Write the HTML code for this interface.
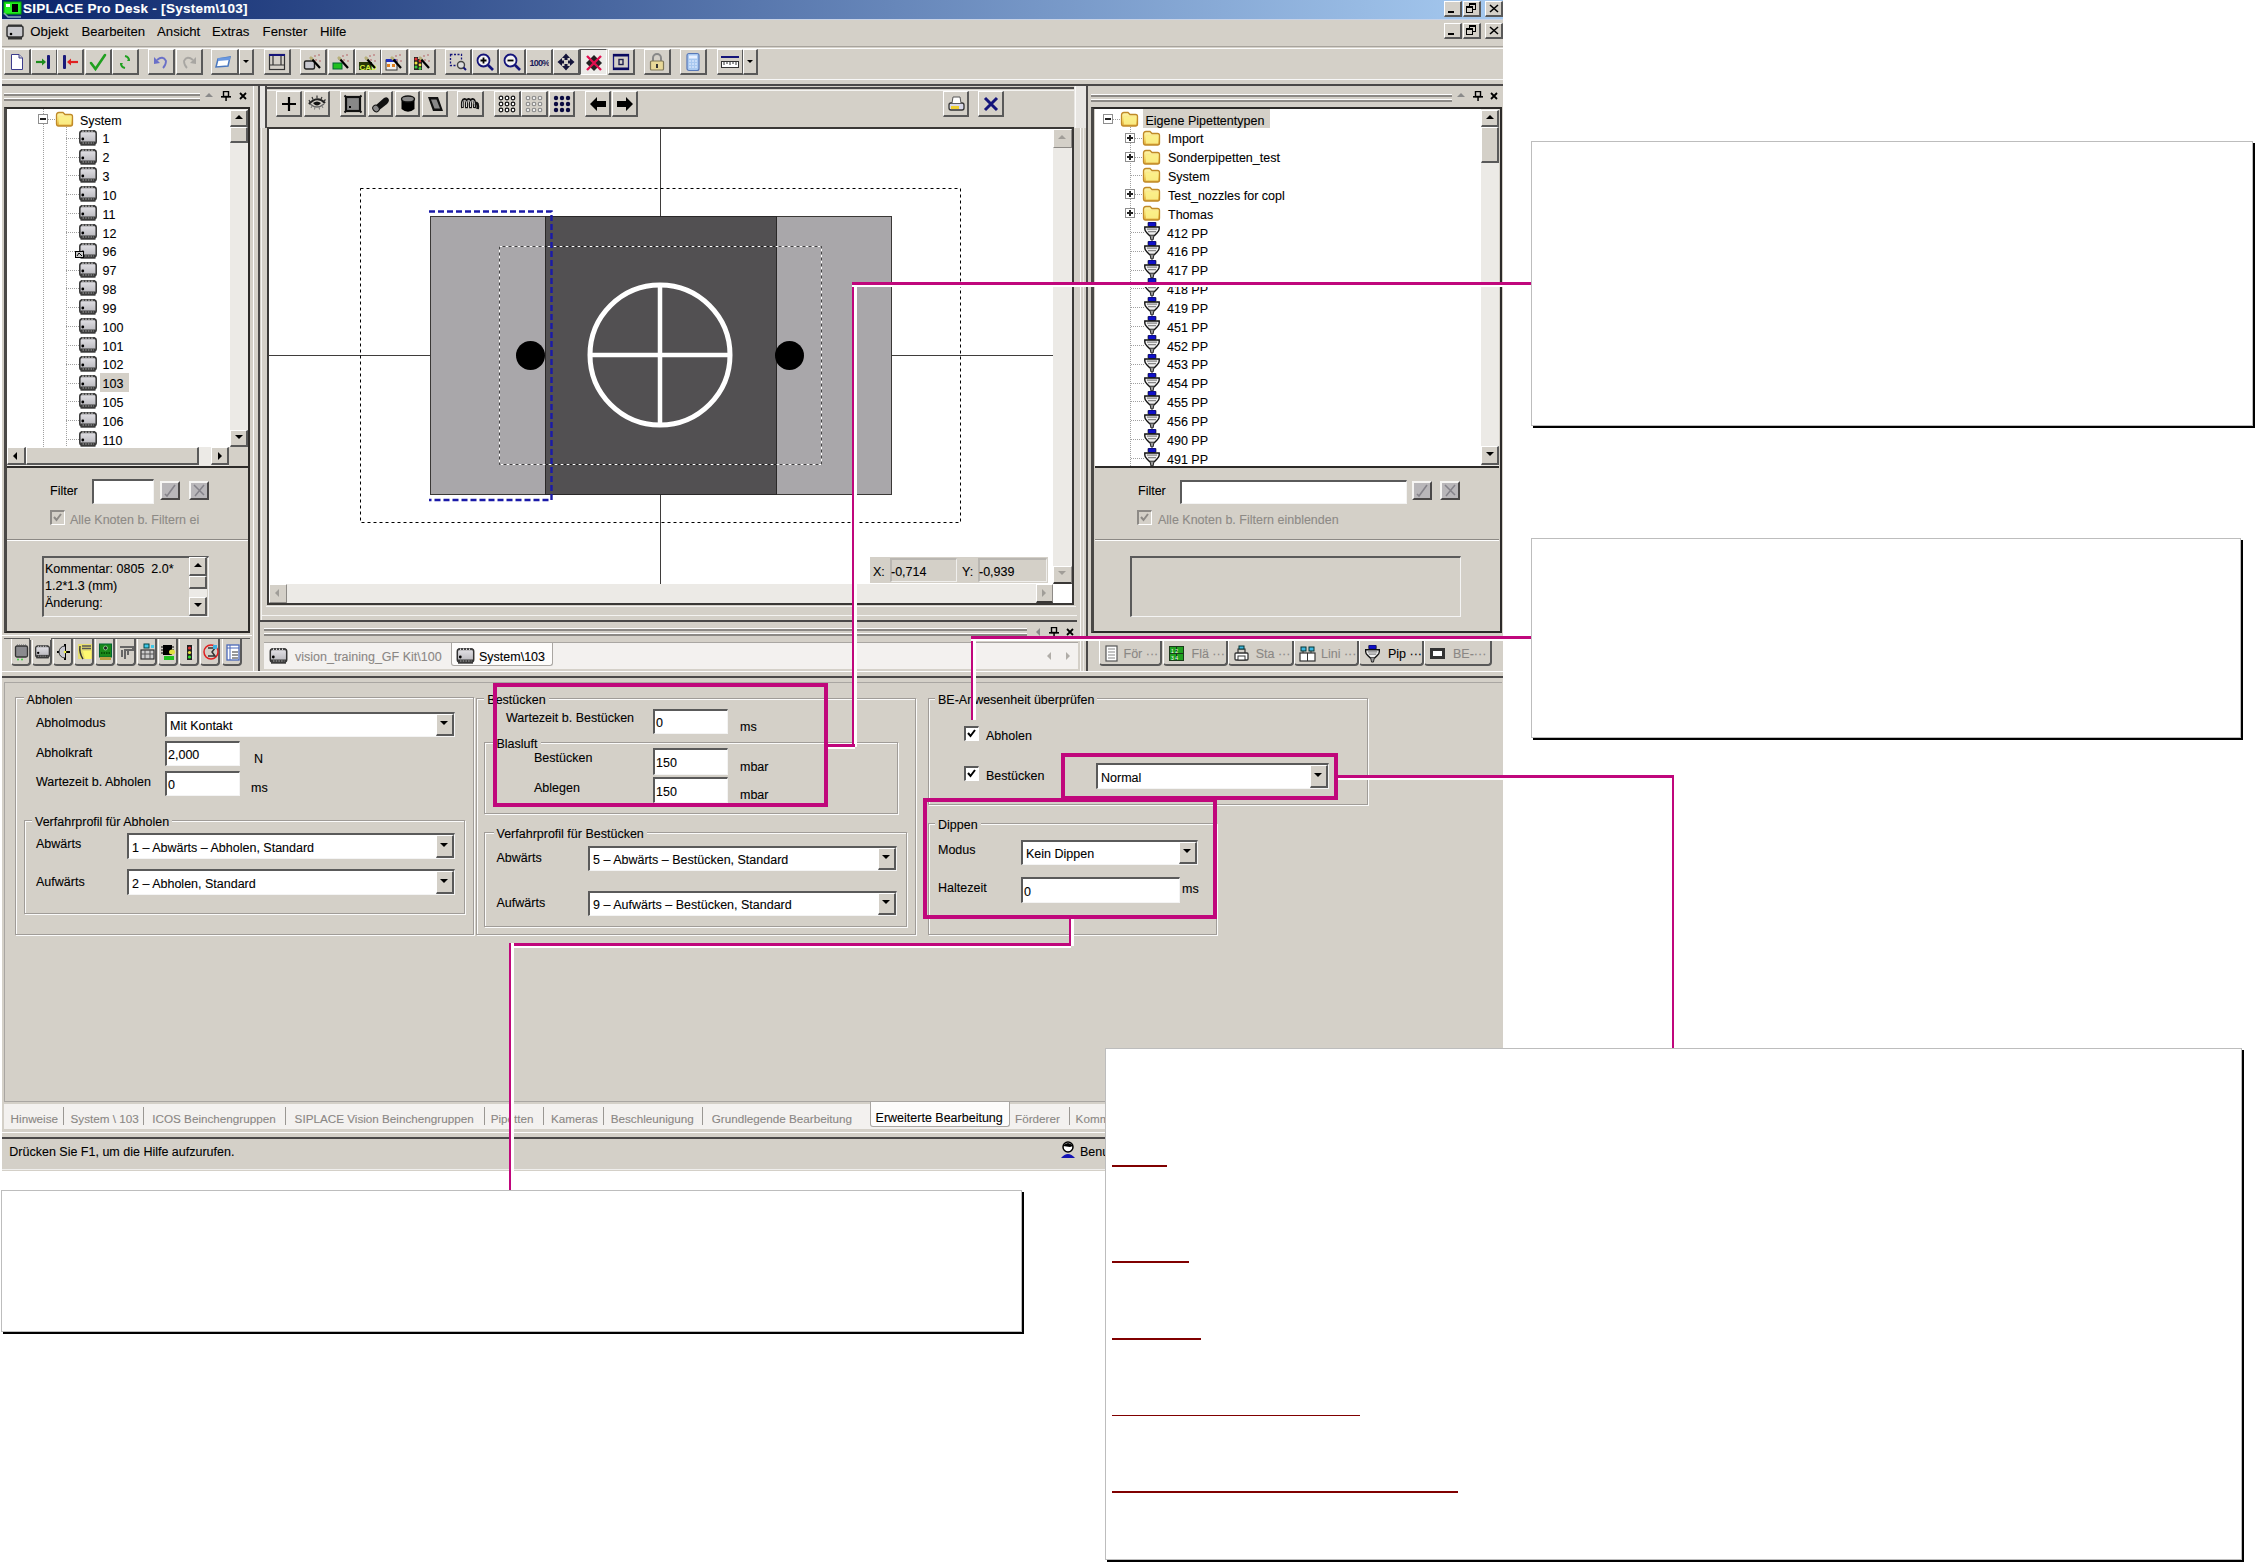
<!DOCTYPE html><html><head><meta charset="utf-8"><style>html,body{margin:0;padding:0;background:#fff;width:2255px;height:1562px;overflow:hidden;position:relative}.a{position:absolute}.t{position:absolute;font-family:"Liberation Sans",sans-serif;white-space:pre;color:#000;-webkit-text-stroke:0.1px currentColor}</style></head><body>
<svg width="0" height="0" style="position:absolute"><defs><linearGradient id="gcomp" x1="0" y1="0" x2="0" y2="1"><stop offset="0" stop-color="#e4e3e8"/><stop offset="1" stop-color="#b4b3b8"/></linearGradient><linearGradient id="gfold" x1="0" y1="0" x2="0" y2="1"><stop offset="0" stop-color="#fff8b0"/><stop offset="0.6" stop-color="#f6dc6a"/><stop offset="1" stop-color="#e0a838"/></linearGradient><symbol id="comp" viewBox="0 0 18 16"><rect x="0.8" y="1" width="16.4" height="13" rx="2.5" fill="url(#gcomp)" stroke="#333" stroke-width="1.5"/><rect x="2" y="0" width="14" height="2.2" fill="#444"/><path d="M4 0.5 V2 M7 0.5 V2 M10 0.5 V2 M13 0.5 V2" stroke="#ddd" stroke-width="1"/><rect x="1.5" y="11.5" width="15" height="4.2" fill="#3a3a3a"/><path d="M3.5 13 H15" stroke="#aaa" stroke-width="1" stroke-dasharray="1.5,1.2"/><circle cx="3.8" cy="9" r="1.4" fill="#000"/></symbol><symbol id="fold" viewBox="0 0 19 16"><path d="M1.5 4 Q1.5 1.5 4 1.5 L8 1.5 L10 3.5 L15.5 3.5 Q17.5 3.5 17.5 5.5 L17.5 13 Q17.5 15 15.5 15 L3.5 15 Q1.5 15 1.5 13 Z" fill="url(#gfold)" stroke="#c08a28" stroke-width="1.3"/><rect x="4" y="6" width="12" height="7.5" fill="#fbef8a" opacity="0.9"/></symbol><symbol id="nozz" viewBox="0 0 16 19"><rect x="4" y="0" width="8" height="4.5" rx="1" fill="#1010c8" stroke="#000" stroke-width="0.6"/><path d="M0.8 5 L15.2 5 L15.2 7 Q15.2 9 13 11 L10.5 13.5 L5.5 13.5 L3 11 Q0.8 9 0.8 7 Z" fill="#eee" stroke="#111" stroke-width="1.4"/><path d="M3 7.2 H13 M4 9.6 H12" stroke="#888" stroke-width="1.2"/><path d="M6 13.5 L7 18 L9 18 L10 13.5" fill="#999" stroke="#222" stroke-width="1"/></symbol></defs></svg>
<div class="a" style="left:2px;top:0px;width:1501px;height:1171px;background:#d4d0c8"></div>
<div class="a" style="left:2px;top:0px;width:1501px;height:19px;background:linear-gradient(to right,#0a246a 0%,#a6caf0 100%)"></div>
<div class="a" style="left:2px;top:19px;width:1501px;height:1px;background:#c9d3e6"></div>
<svg class="a" style="left:3px;top:1px;" width="19" height="17" viewBox="0 0 19 17"><rect x="1" y="1" width="17" height="12" fill="#2e2" stroke="#0a0" /><rect x="9" y="3" width="6" height="8" fill="#000"/><rect x="3" y="3" width="4" height="3" fill="#fff"/><path d="M1 12 L5 16 L18 16" stroke="#8ab" stroke-width="1.5" fill="none"/></svg>
<div class="t" style="left:23px;top:2.0px;font-size:13.5px;line-height:13.5px;color:#fff;font-weight:bold;letter-spacing:0.28px">SIPLACE Pro Desk - [System\103]</div>
<div class="a" style="left:1444px;top:1px;width:18px;height:16px;background:#d4d0c8;border-top:1px solid #fff;border-left:1px solid #fff;border-right:2px solid #595959;border-bottom:2px solid #595959;box-sizing:border-box"></div>
<div class="a" style="left:1448px;top:11px;width:6px;height:2px;background:#000"></div>
<div class="a" style="left:1463px;top:1px;width:18px;height:16px;background:#d4d0c8;border-top:1px solid #fff;border-left:1px solid #fff;border-right:2px solid #595959;border-bottom:2px solid #595959;box-sizing:border-box"></div>
<svg class="a" style="left:1466px;top:3px;" width="11" height="11" viewBox="0 0 11 11"><rect x="3.5" y="0.5" width="6" height="6" fill="none" stroke="#000"/><rect x="3" y="0" width="7" height="2" fill="#000"/><rect x="0.5" y="3.5" width="6" height="6" fill="#d4d0c8" stroke="#000"/><rect x="0" y="3" width="7" height="2" fill="#000"/></svg>
<div class="a" style="left:1485px;top:1px;width:18px;height:16px;background:#d4d0c8;border-top:1px solid #fff;border-left:1px solid #fff;border-right:2px solid #595959;border-bottom:2px solid #595959;box-sizing:border-box"></div>
<svg class="a" style="left:1489px;top:4px;" width="10" height="9" viewBox="0 0 10 9"><path d="M1 1 L9 8 M9 1 L1 8" stroke="#000" stroke-width="1.6"/></svg>
<div class="a" style="left:1444px;top:23px;width:18px;height:16px;background:#d4d0c8;border-top:1px solid #fff;border-left:1px solid #fff;border-right:2px solid #595959;border-bottom:2px solid #595959;box-sizing:border-box"></div>
<div class="a" style="left:1448px;top:33px;width:6px;height:2px;background:#000"></div>
<div class="a" style="left:1463px;top:23px;width:18px;height:16px;background:#d4d0c8;border-top:1px solid #fff;border-left:1px solid #fff;border-right:2px solid #595959;border-bottom:2px solid #595959;box-sizing:border-box"></div>
<svg class="a" style="left:1466px;top:25px;" width="11" height="11" viewBox="0 0 11 11"><rect x="3.5" y="0.5" width="6" height="6" fill="none" stroke="#000"/><rect x="3" y="0" width="7" height="2" fill="#000"/><rect x="0.5" y="3.5" width="6" height="6" fill="#d4d0c8" stroke="#000"/><rect x="0" y="3" width="7" height="2" fill="#000"/></svg>
<div class="a" style="left:1485px;top:23px;width:18px;height:16px;background:#d4d0c8;border-top:1px solid #fff;border-left:1px solid #fff;border-right:2px solid #595959;border-bottom:2px solid #595959;box-sizing:border-box"></div>
<svg class="a" style="left:1489px;top:26px;" width="10" height="9" viewBox="0 0 10 9"><path d="M1 1 L9 8 M9 1 L1 8" stroke="#000" stroke-width="1.6"/></svg>
<svg class="a" style="left:6px;top:24px;" width="19" height="16" viewBox="0 0 19 16"><rect x="1" y="2" width="16" height="11" rx="2" fill="#c8c8cc" stroke="#333" stroke-width="1.5"/><rect x="2" y="0.5" width="14" height="2" fill="#333"/><rect x="2" y="13" width="14" height="2.5" fill="#333"/><circle cx="5" cy="10" r="1.3" fill="#000"/></svg>
<div class="t" style="left:30.3px;top:24.6px;font-size:13.2px;line-height:13.2px;color:#000;font-weight:normal;">Objekt</div>
<div class="t" style="left:81.4px;top:24.6px;font-size:13.2px;line-height:13.2px;color:#000;font-weight:normal;">Bearbeiten</div>
<div class="t" style="left:157px;top:24.6px;font-size:13.2px;line-height:13.2px;color:#000;font-weight:normal;">Ansicht</div>
<div class="t" style="left:212px;top:24.6px;font-size:13.2px;line-height:13.2px;color:#000;font-weight:normal;">Extras</div>
<div class="t" style="left:262.6px;top:24.6px;font-size:13.2px;line-height:13.2px;color:#000;font-weight:normal;">Fenster</div>
<div class="t" style="left:320px;top:24.6px;font-size:13.2px;line-height:13.2px;color:#000;font-weight:normal;">Hilfe</div>
<div class="a" style="left:2px;top:46px;width:1501px;height:1px;background:#a7a39d"></div>
<div class="a" style="left:2px;top:48px;width:1501px;height:1px;background:#fbfbfb"></div>
<div class="a" style="left:4px;top:49px;width:27px;height:26px;background:#d4d0c8;border-top:1px solid #fff;border-left:1px solid #fff;border-right:2px solid #595959;border-bottom:2px solid #595959;box-sizing:border-box"></div>
<div class="a" style="left:31px;top:49px;width:27px;height:26px;background:#d4d0c8;border-top:1px solid #fff;border-left:1px solid #fff;border-right:2px solid #595959;border-bottom:2px solid #595959;box-sizing:border-box"></div>
<div class="a" style="left:57px;top:49px;width:27px;height:26px;background:#d4d0c8;border-top:1px solid #fff;border-left:1px solid #fff;border-right:2px solid #595959;border-bottom:2px solid #595959;box-sizing:border-box"></div>
<div class="a" style="left:85px;top:49px;width:27px;height:26px;background:#d4d0c8;border-top:1px solid #fff;border-left:1px solid #fff;border-right:2px solid #595959;border-bottom:2px solid #595959;box-sizing:border-box"></div>
<div class="a" style="left:112px;top:49px;width:27px;height:26px;background:#d4d0c8;border-top:1px solid #fff;border-left:1px solid #fff;border-right:2px solid #595959;border-bottom:2px solid #595959;box-sizing:border-box"></div>
<div class="a" style="left:148px;top:49px;width:27px;height:26px;background:#d4d0c8;border-top:1px solid #fff;border-left:1px solid #fff;border-right:2px solid #595959;border-bottom:2px solid #595959;box-sizing:border-box"></div>
<div class="a" style="left:176px;top:49px;width:27px;height:26px;background:#d4d0c8;border-top:1px solid #fff;border-left:1px solid #fff;border-right:2px solid #595959;border-bottom:2px solid #595959;box-sizing:border-box"></div>
<div class="a" style="left:211px;top:49px;width:28px;height:26px;background:#d4d0c8;border-top:1px solid #fff;border-left:1px solid #fff;border-right:2px solid #595959;border-bottom:2px solid #595959;box-sizing:border-box"></div>
<div class="a" style="left:264px;top:49px;width:27px;height:26px;background:#d4d0c8;border-top:1px solid #fff;border-left:1px solid #fff;border-right:2px solid #595959;border-bottom:2px solid #595959;box-sizing:border-box"></div>
<div class="a" style="left:300px;top:49px;width:27px;height:26px;background:#d4d0c8;border-top:1px solid #fff;border-left:1px solid #fff;border-right:2px solid #595959;border-bottom:2px solid #595959;box-sizing:border-box"></div>
<div class="a" style="left:328px;top:49px;width:27px;height:26px;background:#d4d0c8;border-top:1px solid #fff;border-left:1px solid #fff;border-right:2px solid #595959;border-bottom:2px solid #595959;box-sizing:border-box"></div>
<div class="a" style="left:355px;top:49px;width:27px;height:26px;background:#d4d0c8;border-top:1px solid #fff;border-left:1px solid #fff;border-right:2px solid #595959;border-bottom:2px solid #595959;box-sizing:border-box"></div>
<div class="a" style="left:381px;top:49px;width:27px;height:26px;background:#d4d0c8;border-top:1px solid #fff;border-left:1px solid #fff;border-right:2px solid #595959;border-bottom:2px solid #595959;box-sizing:border-box"></div>
<div class="a" style="left:409px;top:49px;width:27px;height:26px;background:#d4d0c8;border-top:1px solid #fff;border-left:1px solid #fff;border-right:2px solid #595959;border-bottom:2px solid #595959;box-sizing:border-box"></div>
<div class="a" style="left:445px;top:49px;width:27px;height:26px;background:#d4d0c8;border-top:1px solid #fff;border-left:1px solid #fff;border-right:2px solid #595959;border-bottom:2px solid #595959;box-sizing:border-box"></div>
<div class="a" style="left:472px;top:49px;width:27px;height:26px;background:#d4d0c8;border-top:1px solid #fff;border-left:1px solid #fff;border-right:2px solid #595959;border-bottom:2px solid #595959;box-sizing:border-box"></div>
<div class="a" style="left:499px;top:49px;width:27px;height:26px;background:#d4d0c8;border-top:1px solid #fff;border-left:1px solid #fff;border-right:2px solid #595959;border-bottom:2px solid #595959;box-sizing:border-box"></div>
<div class="a" style="left:526px;top:49px;width:27px;height:26px;background:#d4d0c8;border-top:1px solid #fff;border-left:1px solid #fff;border-right:2px solid #595959;border-bottom:2px solid #595959;box-sizing:border-box"></div>
<div class="a" style="left:553px;top:49px;width:27px;height:26px;background:#d4d0c8;border-top:1px solid #fff;border-left:1px solid #fff;border-right:2px solid #595959;border-bottom:2px solid #595959;box-sizing:border-box"></div>
<div class="a" style="left:580px;top:49px;width:27px;height:26px;background:#ecebe8;border-top:1px solid #595959;border-left:1px solid #595959;border-right:1px solid #fff;border-bottom:1px solid #fff;box-sizing:border-box"></div>
<div class="a" style="left:608px;top:49px;width:27px;height:26px;background:#d4d0c8;border-top:1px solid #fff;border-left:1px solid #fff;border-right:2px solid #595959;border-bottom:2px solid #595959;box-sizing:border-box"></div>
<div class="a" style="left:644px;top:49px;width:27px;height:26px;background:#d4d0c8;border-top:1px solid #fff;border-left:1px solid #fff;border-right:2px solid #595959;border-bottom:2px solid #595959;box-sizing:border-box"></div>
<div class="a" style="left:680px;top:49px;width:27px;height:26px;background:#d4d0c8;border-top:1px solid #fff;border-left:1px solid #fff;border-right:2px solid #595959;border-bottom:2px solid #595959;box-sizing:border-box"></div>
<div class="a" style="left:717px;top:49px;width:27px;height:26px;background:#d4d0c8;border-top:1px solid #fff;border-left:1px solid #fff;border-right:2px solid #595959;border-bottom:2px solid #595959;box-sizing:border-box"></div>
<svg class="a" style="left:7px;top:52px;" width="20" height="20" viewBox="0 0 20 20"><path d="M4.5 2.5 L12 2.5 L15.5 6 L15.5 17.5 L4.5 17.5 Z" fill="#fff" stroke="#3c3c8c" stroke-width="1"/><path d="M12 2.5 L12 6 L15.5 6" fill="#ccc" stroke="#3c3c8c"/></svg>
<svg class="a" style="left:34px;top:52px;" width="20" height="20" viewBox="0 0 20 20"><path d="M2 10 L10 10" stroke="#1e8c1e" stroke-width="2.2"/><path d="M8 6.5 L12 10 L8 13.5 Z" fill="#1e8c1e"/><rect x="13" y="3" width="3" height="14" rx="1" fill="#1a1a7a"/></svg>
<svg class="a" style="left:60px;top:52px;" width="20" height="20" viewBox="0 0 20 20"><path d="M9 10 L18 10" stroke="#e02020" stroke-width="2.2"/><path d="M11 6.5 L7 10 L11 13.5 Z" fill="#e02020"/><rect x="3" y="3" width="3" height="14" rx="1" fill="#1a1a7a"/></svg>
<svg class="a" style="left:88px;top:52px;" width="20" height="20" viewBox="0 0 20 20"><path d="M3 11 L7.5 17 L17 3" stroke="#20a020" stroke-width="2.6" fill="none" stroke-linecap="round"/></svg>
<svg class="a" style="left:115px;top:52px;" width="20" height="20" viewBox="0 0 20 20"><path d="M10 4 A5 5 0 0 1 14 9" stroke="#20a020" stroke-width="2" fill="none"/><path d="M12 9 L15 9 L14 6" fill="#20a020"/><path d="M10 16 A5 5 0 0 1 6 11" stroke="#20a020" stroke-width="2" fill="none"/><path d="M8 11 L5 11 L6 14" fill="#20a020"/></svg>
<svg class="a" style="left:151px;top:52px;" width="20" height="20" viewBox="0 0 20 20"><path d="M6 8 Q12 3 15 9 Q15 13 12 16" stroke="#6a70c8" stroke-width="1.8" fill="none"/><path d="M3 5 L3 12 L9 11 Z" fill="#6a70c8"/></svg>
<svg class="a" style="left:179px;top:52px;" width="20" height="20" viewBox="0 0 20 20"><path d="M14 8 Q8 3 5 9 Q5 13 8 16" stroke="#a8a6a2" stroke-width="1.8" fill="none"/><path d="M17 5 L17 12 L11 11 Z" fill="#a8a6a2"/></svg>
<svg class="a" style="left:214px;top:52px;" width="20" height="20" viewBox="0 0 20 20"><path d="M4 7 L16 5 L14 14 L2 15 Z" fill="#fff" stroke="#4a78c0" stroke-width="1.5"/><path d="M4 6 L16 5 L16 8 L4 9 Z" fill="#6a98e0"/></svg>
<svg class="a" style="left:267px;top:52px;" width="20" height="20" viewBox="0 0 20 20"><rect x="2.5" y="2.5" width="15" height="15" fill="none" stroke="#333" stroke-width="1.2"/><rect x="2" y="2" width="16" height="2" fill="#14147a"/><path d="M6 4 V13 M14 4 V13 M2.5 13 H17.5" stroke="#333" stroke-width="1.2"/></svg>
<svg class="a" style="left:303px;top:52px;" width="20" height="20" viewBox="0 0 20 20"><rect x="1.5" y="9" width="10" height="8" rx="1.5" fill="#c8c8d0" stroke="#222" stroke-width="1.4"/><path d="M8 6 L17 16" stroke="#000" stroke-width="2.2"/><path d="M7 5 L9.5 7.5" stroke="#b8b07a" stroke-width="2.6"/><circle cx="12" cy="4" r="1" fill="#c08888"/><circle cx="16" cy="3" r="1" fill="#c08888"/><circle cx="13" cy="8" r="1" fill="#c08888"/><circle cx="17" cy="9" r="1" fill="#c08888"/></svg>
<svg class="a" style="left:331px;top:52px;" width="20" height="20" viewBox="0 0 20 20"><rect x="2" y="11" width="9" height="6" fill="#20c020" stroke="#063" stroke-width="1"/><path d="M8 6 L17 16" stroke="#000" stroke-width="2.2"/><path d="M7 5 L9.5 7.5" stroke="#b8b07a" stroke-width="2.6"/><circle cx="12" cy="4" r="1" fill="#c08888"/><circle cx="16" cy="3" r="1" fill="#c08888"/><circle cx="13" cy="8" r="1" fill="#c08888"/><circle cx="17" cy="9" r="1" fill="#c08888"/></svg>
<svg class="a" style="left:358px;top:52px;" width="20" height="20" viewBox="0 0 20 20"><rect x="1" y="10" width="13" height="8" fill="#283808"/><text x="1.5" y="17.5" font-family="Liberation Sans" font-size="8" font-weight="bold" fill="#d8f040">CAD</text><path d="M8 6 L17 16" stroke="#000" stroke-width="2.2"/><path d="M7 5 L9.5 7.5" stroke="#b8b07a" stroke-width="2.6"/><circle cx="12" cy="4" r="1" fill="#c08888"/><circle cx="16" cy="3" r="1" fill="#c08888"/><circle cx="13" cy="8" r="1" fill="#c08888"/><circle cx="17" cy="9" r="1" fill="#c08888"/></svg>
<svg class="a" style="left:384px;top:52px;" width="20" height="20" viewBox="0 0 20 20"><rect x="2" y="8" width="11" height="10" fill="#f0f0f0" stroke="#333"/><rect x="2" y="7" width="11" height="3" fill="#2030c0"/><rect x="3" y="12" width="3" height="3" fill="#e08020"/><rect x="8" y="12" width="3" height="3" fill="#e08020"/><path d="M8 6 L17 16" stroke="#000" stroke-width="2.2"/><path d="M7 5 L9.5 7.5" stroke="#b8b07a" stroke-width="2.6"/><circle cx="12" cy="4" r="1" fill="#c08888"/><circle cx="16" cy="3" r="1" fill="#c08888"/><circle cx="13" cy="8" r="1" fill="#c08888"/><circle cx="17" cy="9" r="1" fill="#c08888"/></svg>
<svg class="a" style="left:412px;top:52px;" width="20" height="20" viewBox="0 0 20 20"><rect x="2" y="5" width="4" height="13" fill="#222"/><circle cx="4" cy="7" r="1.5" fill="#e03030"/><circle cx="4" cy="11" r="1.5" fill="#f0e040"/><circle cx="4" cy="15" r="1.5" fill="#40d040"/><rect x="6" y="7" width="4" height="11" fill="#222"/><circle cx="8" cy="9" r="1.4" fill="#e03030"/><circle cx="8" cy="13" r="1.4" fill="#f0e040"/><circle cx="8" cy="16.5" r="1.4" fill="#40d040"/><path d="M8 6 L17 16" stroke="#000" stroke-width="2.2"/><path d="M7 5 L9.5 7.5" stroke="#b8b07a" stroke-width="2.6"/><circle cx="12" cy="4" r="1" fill="#c08888"/><circle cx="16" cy="3" r="1" fill="#c08888"/><circle cx="13" cy="8" r="1" fill="#c08888"/><circle cx="17" cy="9" r="1" fill="#c08888"/></svg>
<svg class="a" style="left:448px;top:52px;" width="20" height="20" viewBox="0 0 20 20"><rect x="2.5" y="2.5" width="11" height="11" fill="none" stroke="#14147a" stroke-width="1.3" stroke-dasharray="2,1.5"/><circle cx="13" cy="13" r="3.5" fill="#ddd" stroke="#444" stroke-width="1.4"/><path d="M15.5 15.5 L18 18" stroke="#14147a" stroke-width="2"/></svg>
<svg class="a" style="left:475px;top:52px;" width="20" height="20" viewBox="0 0 20 20"><circle cx="8.5" cy="8.5" r="6" fill="#f4f4f4" stroke="#14147a" stroke-width="1.8"/><path d="M5.5 8.5 H11.5 M8.5 5.5 V11.5" stroke="#000" stroke-width="1.8"/><path d="M13 13 L18 18" stroke="#14147a" stroke-width="2.6"/></svg>
<svg class="a" style="left:502px;top:52px;" width="20" height="20" viewBox="0 0 20 20"><circle cx="8.5" cy="8.5" r="6" fill="#f4f4f4" stroke="#14147a" stroke-width="1.8"/><path d="M5.5 8.5 H11.5" stroke="#000" stroke-width="1.8"/><path d="M13 13 L18 18" stroke="#14147a" stroke-width="2.6"/></svg>
<svg class="a" style="left:529px;top:52px;" width="20" height="20" viewBox="0 0 20 20"><text x="0.5" y="14" font-family="Liberation Sans" font-size="9" font-weight="bold" fill="#1a1a5a" letter-spacing="-0.8">100%</text></svg>
<svg class="a" style="left:556px;top:52px;" width="20" height="20" viewBox="0 0 20 20"><path d="M10 1.5 L14 6 L11.5 6 L11.5 8 L8.5 8 L8.5 6 L6 6 Z M10 18.5 L14 14 L11.5 14 L11.5 12 L8.5 12 L8.5 14 L6 14 Z M1.5 10 L6 6 L6 8.5 L8 8.5 L8 11.5 L6 11.5 L6 14 Z M18.5 10 L14 6 L14 8.5 L12 8.5 L12 11.5 L14 11.5 L14 14 Z" fill="#14143a"/></svg>
<svg class="a" style="left:584px;top:53px;" width="20" height="20" viewBox="0 0 20 20"><path d="M10 2 L14 6 L18 10 L14 14 L10 18 L6 14 L2 10 L6 6 Z" fill="#222"/><path d="M3 3 L17 17 M17 3 L3 17" stroke="#e01050" stroke-width="2.4"/></svg>
<svg class="a" style="left:611px;top:52px;" width="20" height="20" viewBox="0 0 20 20"><rect x="2.5" y="2.5" width="15" height="15" fill="none" stroke="#14147a" stroke-width="1.3"/><rect x="2" y="2" width="16" height="2.5" fill="#0a0a60"/><rect x="2" y="15.5" width="16" height="2.5" fill="#0a0a60"/><rect x="8" y="7.5" width="4" height="5" fill="none" stroke="#222250" stroke-width="1.4"/></svg>
<svg class="a" style="left:647px;top:52px;" width="20" height="20" viewBox="0 0 20 20"><path d="M6 9 V6 A4 4 0 0 1 14 6 V9" stroke="#888" stroke-width="2" fill="none"/><rect x="3.5" y="9" width="13" height="9" rx="1" fill="#e8d898" stroke="#807858" stroke-width="1.2"/><rect x="9" y="12" width="2" height="4" fill="#333"/></svg>
<svg class="a" style="left:683px;top:52px;" width="20" height="20" viewBox="0 0 20 20"><rect x="4" y="1.5" width="12" height="17" rx="2" fill="#a8c8f0" stroke="#5878b8" stroke-width="1.2"/><rect x="6" y="3.5" width="8" height="3" fill="#e8f0ff"/><path d="M6 9 H14 M6 12 H14 M6 15 H14" stroke="#e8f0ff" stroke-width="1.2" stroke-dasharray="2,1"/></svg>
<svg class="a" style="left:720px;top:52px;" width="20" height="20" viewBox="0 0 20 20"><rect x="1" y="4" width="18" height="2" fill="#14147a"/><rect x="1.5" y="9.5" width="17" height="6" fill="#fff" stroke="#333"/><path d="M4 10 V13 M7 10 V12 M10 10 V13 M13 10 V12 M16 10 V13" stroke="#333"/></svg>
<div class="a" style="left:239px;top:49px;width:15px;height:26px;background:#d4d0c8;border-top:1px solid #fff;border-left:1px solid #fff;border-right:2px solid #595959;border-bottom:2px solid #595959;box-sizing:border-box"></div>
<svg class="a" style="left:243px;top:60px;" width="6" height="4" viewBox="0 0 6 4"><path d="M0 0 L6 0 L3 3 Z" fill="#000"/></svg>
<div class="a" style="left:743px;top:49px;width:15px;height:26px;background:#d4d0c8;border-top:1px solid #fff;border-left:1px solid #fff;border-right:2px solid #595959;border-bottom:2px solid #595959;box-sizing:border-box"></div>
<svg class="a" style="left:747px;top:60px;" width="6" height="4" viewBox="0 0 6 4"><path d="M0 0 L6 0 L3 3 Z" fill="#000"/></svg>
<div class="a" style="left:2px;top:79px;width:1501px;height:1px;background:#f7f7f7"></div>
<div class="a" style="left:2px;top:84px;width:1501px;height:2px;background:#4a4848"></div>
<div class="a" style="left:4px;top:93px;width:196px;height:1px;background:#fdfdfd"></div>
<div class="a" style="left:4px;top:94px;width:196px;height:2px;background:#8c8985"></div>
<div class="a" style="left:4px;top:98px;width:196px;height:1px;background:#fdfdfd"></div>
<div class="a" style="left:4px;top:99px;width:196px;height:2px;background:#8c8985"></div>
<svg class="a" style="left:205px;top:93px;" width="8" height="5" viewBox="0 0 8 5"><path d="M0 4 L8 4 L4 0 Z" fill="#8a8a8a"/></svg>
<svg class="a" style="left:221px;top:91px;" width="10" height="10" viewBox="0 0 10 10"><rect x="2.5" y="0.5" width="5" height="5" fill="none" stroke="#000" stroke-width="1.4"/><rect x="0" y="5" width="10" height="1.6" fill="#000"/><rect x="4.3" y="6" width="1.5" height="4" fill="#000"/></svg>
<svg class="a" style="left:239px;top:92px;" width="8" height="8" viewBox="0 0 8 8"><path d="M1 1 L7 7 M7 1 L1 7" stroke="#000" stroke-width="1.8"/></svg>
<div class="a" style="left:4px;top:107px;width:246px;height:526px;background:#d4d0c8;border-top:2px solid #2c2a28;border-left:3px solid #4a4846;border-right:2px solid #2c2a28;border-bottom:2px solid #2c2a28;box-sizing:border-box"></div>
<div class="a" style="left:7px;top:109px;width:223px;height:338px;background:#fff"></div>
<div class="a" style="left:230px;top:109px;width:18px;height:338px;background:#eceae6"></div>
<div class="a" style="left:230px;top:110px;width:18px;height:17px;background:#d4d0c8;border-top:1px solid #fff;border-left:1px solid #fff;border-right:2px solid #595959;border-bottom:2px solid #595959;box-sizing:border-box"></div>
<svg class="a" style="left:235px;top:115px;" width="8" height="5" viewBox="0 0 8 5"><path d="M0 4 L8 4 L4 0 Z" fill="#000"/></svg>
<div class="a" style="left:230px;top:127px;width:18px;height:16px;background:#d4d0c8;border-top:1px solid #fff;border-left:1px solid #fff;border-right:2px solid #595959;border-bottom:2px solid #595959;box-sizing:border-box"></div>
<div class="a" style="left:230px;top:430px;width:18px;height:17px;background:#d4d0c8;border-top:1px solid #fff;border-left:1px solid #fff;border-right:2px solid #595959;border-bottom:2px solid #595959;box-sizing:border-box"></div>
<svg class="a" style="left:235px;top:435px;" width="8" height="5" viewBox="0 0 8 5"><path d="M0 0 L8 0 L4 4 Z" fill="#000"/></svg>
<div class="a" style="left:7px;top:447px;width:241px;height:19px;background:#eceae6"></div>
<div class="a" style="left:7px;top:447px;width:19px;height:18px;background:#d4d0c8;border-top:1px solid #fff;border-left:1px solid #fff;border-right:2px solid #595959;border-bottom:2px solid #595959;box-sizing:border-box"></div>
<svg class="a" style="left:13px;top:452px;" width="5" height="8" viewBox="0 0 5 8"><path d="M4 0 L4 8 L0 4 Z" fill="#000"/></svg>
<div class="a" style="left:26px;top:447px;width:173px;height:18px;background:#d4d0c8;border-top:1px solid #fff;border-left:1px solid #fff;border-right:2px solid #595959;border-bottom:2px solid #595959;box-sizing:border-box"></div>
<div class="a" style="left:211px;top:447px;width:18px;height:18px;background:#d4d0c8;border-top:1px solid #fff;border-left:1px solid #fff;border-right:2px solid #595959;border-bottom:2px solid #595959;box-sizing:border-box"></div>
<svg class="a" style="left:218px;top:452px;" width="5" height="8" viewBox="0 0 5 8"><path d="M0 0 L0 8 L4 4 Z" fill="#000"/></svg>
<div class="a" style="left:229px;top:447px;width:19px;height:19px;background:#d4d0c8"></div>
<div class="a" style="left:7px;top:466px;width:241px;height:2px;background:#2c2a28"></div>
<div class="t" style="left:50px;top:485.2px;font-size:12.5px;line-height:12.5px;color:#000;font-weight:normal;">Filter</div>
<div class="a" style="left:92px;top:479px;width:62px;height:25px;background:#fff;border-top:2px solid #5a5a5a;border-left:2px solid #5a5a5a;border-right:1px solid #f4f4f4;border-bottom:1px solid #f4f4f4;box-sizing:border-box"></div>
<div class="a" style="left:160px;top:481px;width:20px;height:19px;background:#b9b7ba;border-top:2px solid #f6f5f3;border-left:2px solid #f6f5f3;border-right:2px solid #4a4848;border-bottom:2px solid #4a4848;box-sizing:border-box"></div>
<div class="a" style="left:189px;top:481px;width:20px;height:19px;background:#b9b7ba;border-top:2px solid #f6f5f3;border-left:2px solid #f6f5f3;border-right:2px solid #4a4848;border-bottom:2px solid #4a4848;box-sizing:border-box"></div>
<svg class="a" style="left:162px;top:483px;" width="16" height="15" viewBox="0 0 16 15"><path d="M3 11 L5 13 L13 2" stroke="#85838a" stroke-width="1.6" fill="none"/></svg>
<svg class="a" style="left:191px;top:483px;" width="16" height="15" viewBox="0 0 16 15"><path d="M3 2 L13 12 M13 2 L4 13" stroke="#85838a" stroke-width="1.5"/></svg>
<div class="a" style="left:50px;top:510px;width:15px;height:15px;background:#d4d0c8;border-top:2px solid #8d8a86;border-left:2px solid #8d8a86;border-right:1px solid #fff;border-bottom:1px solid #fff;box-sizing:border-box"></div>
<svg class="a" style="left:52px;top:512px;" width="11" height="11" viewBox="0 0 11 11"><path d="M2 5 L4.5 8 L9 2" stroke="#8d8a86" stroke-width="2" fill="none"/></svg>
<div class="t" style="left:70px;top:514.4px;font-size:12.5px;line-height:12.5px;color:#8d8a86;font-weight:normal;">Alle Knoten b. Filtern ei</div>
<div class="a" style="left:7px;top:539px;width:241px;height:1px;background:#8c8985"></div>
<div class="a" style="left:7px;top:540px;width:241px;height:1px;background:#fdfdfd"></div>
<div class="a" style="left:42px;top:556px;width:167px;height:61px;background:#d4d0c8;border-top:2px solid #5a5a5a;border-left:2px solid #5a5a5a;border-right:1px solid #f4f4f4;border-bottom:1px solid #f4f4f4;box-sizing:border-box"></div>
<div class="t" style="left:45px;top:562.9px;font-size:12.5px;line-height:12.5px;color:#000;font-weight:normal;">Kommentar: 0805  2.0*</div>
<div class="t" style="left:45px;top:579.9px;font-size:12.5px;line-height:12.5px;color:#000;font-weight:normal;">1.2*1.3 (mm)</div>
<div class="t" style="left:45px;top:597.4px;font-size:12.5px;line-height:12.5px;color:#000;font-weight:normal;">Änderung:</div>
<div class="a" style="left:189px;top:557px;width:18px;height:19px;background:#d4d0c8;border-top:1px solid #fff;border-left:1px solid #fff;border-right:2px solid #595959;border-bottom:2px solid #595959;box-sizing:border-box"></div>
<svg class="a" style="left:194px;top:563px;" width="8" height="5" viewBox="0 0 8 5"><path d="M0 4 L8 4 L4 0 Z" fill="#000"/></svg>
<div class="a" style="left:189px;top:576px;width:18px;height:13px;background:#d4d0c8;border-top:1px solid #fff;border-left:1px solid #fff;border-right:2px solid #595959;border-bottom:2px solid #595959;box-sizing:border-box"></div>
<div class="a" style="left:189px;top:589px;width:18px;height:8px;background:#eceae6"></div>
<div class="a" style="left:189px;top:597px;width:18px;height:19px;background:#d4d0c8;border-top:1px solid #fff;border-left:1px solid #fff;border-right:2px solid #595959;border-bottom:2px solid #595959;box-sizing:border-box"></div>
<svg class="a" style="left:194px;top:603px;" width="8" height="5" viewBox="0 0 8 5"><path d="M0 0 L8 0 L4 4 Z" fill="#000"/></svg>
<div class="a" style="left:2px;top:635px;width:250px;height:1px;background:#fdfdfd"></div>
<div class="a" style="left:4px;top:638px;width:246px;height:1px;background:#595959"></div>
<div class="a" style="left:10.5px;top:639px;width:20px;height:27px;background:#d4d0c8;border-left:1px solid #fff;border-right:2px solid #595959;border-bottom:2px solid #595959;border-radius:0 0 4px 4px;box-sizing:border-box"></div>
<svg class="a" style="left:13.5px;top:643px;" width="16" height="18" viewBox="0 0 16 18"><rect x="1.5" y="3" width="12" height="11" rx="1.5" fill="#8a8a8e" stroke="#333" stroke-width="1.3"/><path d="M3 1.5 H13" stroke="#999" stroke-dasharray="1,1"/><circle cx="4" cy="16.5" r="1" fill="#4c4"/><circle cx="8" cy="16.5" r="1" fill="#4c4"/></svg>
<div class="a" style="left:31.6px;top:639px;width:20px;height:27px;background:#d4d0c8;border-left:1px solid #fff;border-right:2px solid #595959;border-bottom:2px solid #595959;border-radius:0 0 4px 4px;box-sizing:border-box"></div>
<svg class="a" style="left:34.6px;top:643px;" width="16" height="18" viewBox="0 0 16 18"><use href="#comp" x="0" y="2" width="15" height="14"/></svg>
<div class="a" style="left:52.7px;top:639px;width:20px;height:27px;background:#d4d0c8;border-left:1px solid #fff;border-right:2px solid #595959;border-bottom:2px solid #595959;border-radius:0 0 4px 4px;box-sizing:border-box"></div>
<svg class="a" style="left:55.7px;top:643px;" width="16" height="18" viewBox="0 0 16 18"><path d="M9 1 V17 M1 9 H14" stroke="#000" stroke-width="2"/><path d="M9 3 A6 6 0 0 0 9 15" fill="#c8c8d0" stroke="#333"/><circle cx="9" cy="9" r="1.3" fill="#ee4"/></svg>
<div class="a" style="left:73.80000000000001px;top:639px;width:20px;height:27px;background:#d4d0c8;border-left:1px solid #fff;border-right:2px solid #595959;border-bottom:2px solid #595959;border-radius:0 0 4px 4px;box-sizing:border-box"></div>
<svg class="a" style="left:76.80000000000001px;top:643px;" width="16" height="18" viewBox="0 0 16 18"><rect x="1" y="1" width="14" height="15" fill="#e8e070"/><path d="M5 3 H14 M5 5.5 H14" stroke="#555" stroke-width="1.4"/><path d="M3 3 Q2 10 6 16" stroke="#333" stroke-width="1.4" fill="none"/><path d="M6 8 L14 8 L14 16 L8 16 Z" fill="#fff870"/></svg>
<div class="a" style="left:94.9px;top:639px;width:20px;height:27px;background:#d4d0c8;border-left:1px solid #fff;border-right:2px solid #595959;border-bottom:2px solid #595959;border-radius:0 0 4px 4px;box-sizing:border-box"></div>
<svg class="a" style="left:97.9px;top:643px;" width="16" height="18" viewBox="0 0 16 18"><rect x="1.5" y="1" width="12" height="13" fill="#1a8a1a" stroke="#063" /><circle cx="7.5" cy="5" r="2" fill="#222" stroke="#8c8"/><path d="M3 10 H12" stroke="#040" stroke-width="1.5" stroke-dasharray="1.5,1"/><rect x="2" y="14" width="11" height="3" fill="#b8a040"/></svg>
<div class="a" style="left:116.0px;top:639px;width:20px;height:27px;background:#d4d0c8;border-left:1px solid #fff;border-right:2px solid #595959;border-bottom:2px solid #595959;border-radius:0 0 4px 4px;box-sizing:border-box"></div>
<svg class="a" style="left:119.0px;top:643px;" width="16" height="18" viewBox="0 0 16 18"><path d="M1 4 L14 4 L14 7 L6 7 L6 16 M3 7 L3 14 M9 7 L9 12" stroke="#666" stroke-width="2" fill="none"/></svg>
<div class="a" style="left:137.10000000000002px;top:639px;width:20px;height:27px;background:#d4d0c8;border-left:1px solid #fff;border-right:2px solid #595959;border-bottom:2px solid #595959;border-radius:0 0 4px 4px;box-sizing:border-box"></div>
<svg class="a" style="left:140.10000000000002px;top:643px;" width="16" height="18" viewBox="0 0 16 18"><rect x="1" y="7" width="13" height="9" fill="#ccc" stroke="#333" stroke-width="1.2"/><path d="M1 11 H14 M5 7 V16 M10 7 V16" stroke="#555"/><rect x="4" y="1" width="5" height="4" fill="#40c8e8" stroke="#044"/><rect x="11" y="2" width="3" height="3" fill="#40c8e8"/></svg>
<div class="a" style="left:158.20000000000002px;top:639px;width:20px;height:27px;background:#d4d0c8;border-left:1px solid #fff;border-right:2px solid #595959;border-bottom:2px solid #595959;border-radius:0 0 4px 4px;box-sizing:border-box"></div>
<svg class="a" style="left:161.20000000000002px;top:643px;" width="16" height="18" viewBox="0 0 16 18"><path d="M2 2 H11 V12 H2 Z" fill="#000"/><path d="M0 4 H2 M0 7 H2 M0 10 H2 M11 4 H13 M11 7 H13" stroke="#000"/><ellipse cx="11" cy="9" rx="3" ry="2.5" fill="#e0e040"/><rect x="3" y="13" width="10" height="4" fill="#20c020"/></svg>
<div class="a" style="left:179.3px;top:639px;width:20px;height:27px;background:#d4d0c8;border-left:1px solid #fff;border-right:2px solid #595959;border-bottom:2px solid #595959;border-radius:0 0 4px 4px;box-sizing:border-box"></div>
<svg class="a" style="left:182.3px;top:643px;" width="16" height="18" viewBox="0 0 16 18"><rect x="5" y="2" width="5" height="15" fill="#222"/><circle cx="7.5" cy="5" r="1.6" fill="#e03030"/><circle cx="7.5" cy="9.5" r="1.6" fill="#e8e040"/><circle cx="7.5" cy="14" r="1.6" fill="#30e030"/><rect x="10" y="3" width="2" height="13" fill="#ddd"/></svg>
<div class="a" style="left:200.4px;top:639px;width:20px;height:27px;background:#d4d0c8;border-left:1px solid #fff;border-right:2px solid #595959;border-bottom:2px solid #595959;border-radius:0 0 4px 4px;box-sizing:border-box"></div>
<svg class="a" style="left:203.4px;top:643px;" width="16" height="18" viewBox="0 0 16 18"><circle cx="8" cy="9" r="7" fill="none" stroke="#e02020" stroke-width="1.5"/><path d="M5 5 L12 5 L9 9 L12 13 L5 13" stroke="#333" stroke-width="1.5" fill="none"/><rect x="10" y="2" width="4" height="4" fill="#40b0e0"/></svg>
<div class="a" style="left:221.5px;top:639px;width:20px;height:27px;background:#d4d0c8;border-left:1px solid #fff;border-right:2px solid #595959;border-bottom:2px solid #595959;border-radius:0 0 4px 4px;box-sizing:border-box"></div>
<svg class="a" style="left:224.5px;top:643px;" width="16" height="18" viewBox="0 0 16 18"><rect x="2" y="2" width="12" height="15" fill="#fff" stroke="#4a68b8" stroke-width="1.3"/><path d="M2 5 H14 M5 2 V17" stroke="#4a68b8"/><path d="M7 9 H13 M7 12 H13 M7 15 H13" stroke="#777" stroke-width="1.5"/></svg>
<div class="a" style="left:30px;top:637px;width:21px;height:3px;background:#d4d0c8"></div>
<div class="a" style="left:2px;top:671px;width:1501px;height:1px;background:#fdfdfd"></div>
<div class="a" style="left:2px;top:676px;width:1501px;height:2px;background:#4a4848"></div>
<div class="a" style="left:253px;top:86px;width:1px;height:585px;background:#fdfdfd"></div>
<div class="a" style="left:258px;top:86px;width:2px;height:585px;background:#4a4848"></div>
<div class="a" style="left:260px;top:86px;width:5px;height:42px;background:#e8e6e3"></div>
<div class="a" style="left:265px;top:86px;width:2px;height:42px;background:#4a4848"></div>
<div class="a" style="left:265px;top:87px;width:809px;height:2px;background:#4a4848"></div>
<div class="a" style="left:267px;top:90px;width:807px;height:1px;background:#f4f3f1"></div>
<div class="a" style="left:276px;top:91px;width:26px;height:26px;background:#d4d0c8;border-top:1px solid #fff;border-left:1px solid #fff;border-right:2px solid #595959;border-bottom:2px solid #595959;box-sizing:border-box"></div>
<svg class="a" style="left:279px;top:94px;" width="20" height="20" viewBox="0 0 20 20"><path d="M3 10 H17 M10 3 V17" stroke="#000" stroke-width="2.2"/></svg>
<div class="a" style="left:304px;top:91px;width:26px;height:26px;background:#d4d0c8;border-top:1px solid #fff;border-left:1px solid #fff;border-right:2px solid #595959;border-bottom:2px solid #595959;box-sizing:border-box"></div>
<svg class="a" style="left:307px;top:94px;" width="20" height="20" viewBox="0 0 20 20"><path d="M2 10 Q10 1 18 9" stroke="#222" stroke-width="2.2" fill="none"/><path d="M3 8 L2 6 M6 5.5 L5 3 M10 4 L10 1.5 M14 5 L15 3 M17 7 L18.5 5.5" stroke="#333" stroke-width="1.2"/><path d="M3 10 Q10 16 17 10" stroke="#666" stroke-width="1.4" fill="none"/><path d="M6 9 Q10 6 14 9 Q10 14 6 9 Z" fill="#111"/><path d="M5 12 L4 14 M8 13 L7.5 15.5 M12 13 L12.5 15.5 M15 12 L16 14" stroke="#777" stroke-width="1"/></svg>
<div class="a" style="left:340px;top:91px;width:26px;height:26px;background:#d4d0c8;border-top:1px solid #fff;border-left:1px solid #fff;border-right:2px solid #595959;border-bottom:2px solid #595959;box-sizing:border-box"></div>
<svg class="a" style="left:343px;top:94px;" width="20" height="20" viewBox="0 0 20 20"><rect x="3" y="3" width="14" height="14" fill="#888" stroke="#111" stroke-width="2.2"/><path d="M1.5 1.5 L4 4 M18.5 1.5 L16 4 M1.5 18.5 L4 16 M18.5 18.5 L16 16" stroke="#111" stroke-width="1.8"/><rect x="6" y="12" width="2" height="2" fill="#000"/></svg>
<div class="a" style="left:368px;top:91px;width:25px;height:26px;background:#d4d0c8;border-top:1px solid #fff;border-left:1px solid #fff;border-right:2px solid #595959;border-bottom:2px solid #595959;box-sizing:border-box"></div>
<svg class="a" style="left:371px;top:94px;" width="20" height="20" viewBox="0 0 20 20"><path d="M4 12 L13 4 Q17 2 18 6 Q18 8 16 10 L7 17 Z" fill="#111"/><ellipse cx="5" cy="14.5" rx="3" ry="3.5" transform="rotate(-40 5 14.5)" fill="#888" stroke="#111"/></svg>
<div class="a" style="left:395px;top:91px;width:25px;height:26px;background:#d4d0c8;border-top:1px solid #fff;border-left:1px solid #fff;border-right:2px solid #595959;border-bottom:2px solid #595959;box-sizing:border-box"></div>
<svg class="a" style="left:398px;top:94px;" width="20" height="20" viewBox="0 0 20 20"><path d="M3.5 5 V15 Q10 20.5 16.5 15 V5 Z" fill="#000"/><ellipse cx="10" cy="5" rx="6.5" ry="3" fill="#888" stroke="#111" stroke-width="1.4"/></svg>
<div class="a" style="left:422px;top:91px;width:26px;height:26px;background:#d4d0c8;border-top:1px solid #fff;border-left:1px solid #fff;border-right:2px solid #595959;border-bottom:2px solid #595959;box-sizing:border-box"></div>
<svg class="a" style="left:425px;top:94px;" width="20" height="20" viewBox="0 0 20 20"><path d="M3 3 L13 3 L18 17 L8 17 Z" fill="#111"/><path d="M6 5.5 L11.5 5.5 L15 14.5 L9.5 14.5 Z" fill="#888"/></svg>
<div class="a" style="left:457px;top:91px;width:27px;height:26px;background:#d4d0c8;border-top:1px solid #fff;border-left:1px solid #fff;border-right:2px solid #595959;border-bottom:2px solid #595959;box-sizing:border-box"></div>
<svg class="a" style="left:460px;top:94px;" width="20" height="20" viewBox="0 0 20 20"><path d="M2.5 14 Q1.5 5 5 5.5 Q7.5 6 6.5 14 Q5.5 5 9 5.5 Q11.5 6 10.5 14 Q9.5 5 13 5.5 Q15.5 6 14.5 14 Q14 8 16.5 9 Q18.5 10 17.5 15" stroke="#111" stroke-width="2.8" fill="none"/><path d="M2.5 13 Q1.8 6 5 6.3 Q7 6.8 6.5 13 M6.5 13 Q6 6 9 6.3 Q11 6.8 10.5 13 M10.5 13 Q10 6 13 6.3 Q15 6.8 14.5 13" stroke="#ddd" stroke-width="0.8" fill="none"/></svg>
<div class="a" style="left:494px;top:91px;width:27px;height:26px;background:#d4d0c8;border-top:1px solid #fff;border-left:1px solid #fff;border-right:2px solid #595959;border-bottom:2px solid #595959;box-sizing:border-box"></div>
<svg class="a" style="left:497px;top:94px;" width="20" height="20" viewBox="0 0 20 20"><circle cx="4" cy="4" r="1.8" fill="#fff" stroke="#111" stroke-width="1.2"/><circle cx="4" cy="10" r="1.8" fill="#fff" stroke="#111" stroke-width="1.2"/><circle cx="4" cy="16" r="1.8" fill="#fff" stroke="#111" stroke-width="1.2"/><circle cx="10" cy="4" r="1.8" fill="#fff" stroke="#111" stroke-width="1.2"/><circle cx="10" cy="10" r="1.8" fill="#fff" stroke="#111" stroke-width="1.2"/><circle cx="10" cy="16" r="1.8" fill="#fff" stroke="#111" stroke-width="1.2"/><circle cx="16" cy="4" r="1.8" fill="#fff" stroke="#111" stroke-width="1.2"/><circle cx="16" cy="10" r="1.8" fill="#fff" stroke="#111" stroke-width="1.2"/><circle cx="16" cy="16" r="1.8" fill="#fff" stroke="#111" stroke-width="1.2"/></svg>
<div class="a" style="left:521px;top:91px;width:27px;height:26px;background:#d4d0c8;border-top:1px solid #fff;border-left:1px solid #fff;border-right:2px solid #595959;border-bottom:2px solid #595959;box-sizing:border-box"></div>
<svg class="a" style="left:524px;top:94px;" width="20" height="20" viewBox="0 0 20 20"><circle cx="4" cy="4" r="1.8" fill="#eee" stroke="#888" stroke-width="1.1"/><circle cx="4" cy="10" r="1.8" fill="#eee" stroke="#888" stroke-width="1.1"/><circle cx="4" cy="16" r="1.8" fill="#eee" stroke="#888" stroke-width="1.1"/><circle cx="10" cy="4" r="1.8" fill="#eee" stroke="#888" stroke-width="1.1"/><circle cx="10" cy="10" r="1.8" fill="#eee" stroke="#888" stroke-width="1.1"/><circle cx="10" cy="16" r="1.8" fill="#eee" stroke="#888" stroke-width="1.1"/><circle cx="16" cy="4" r="1.8" fill="#eee" stroke="#888" stroke-width="1.1"/><circle cx="16" cy="10" r="1.8" fill="#eee" stroke="#888" stroke-width="1.1"/><circle cx="16" cy="16" r="1.8" fill="#eee" stroke="#888" stroke-width="1.1"/></svg>
<div class="a" style="left:549px;top:91px;width:26px;height:26px;background:#d4d0c8;border-top:1px solid #fff;border-left:1px solid #fff;border-right:2px solid #595959;border-bottom:2px solid #595959;box-sizing:border-box"></div>
<svg class="a" style="left:552px;top:94px;" width="20" height="20" viewBox="0 0 20 20"><circle cx="4" cy="4" r="2.2" fill="#0a0a40"/><circle cx="4" cy="10" r="2.2" fill="#0a0a40"/><circle cx="4" cy="16" r="2.2" fill="#0a0a40"/><circle cx="10" cy="4" r="2.2" fill="#0a0a40"/><circle cx="10" cy="10" r="2.2" fill="#0a0a40"/><circle cx="10" cy="16" r="2.2" fill="#0a0a40"/><circle cx="16" cy="4" r="2.2" fill="#0a0a40"/><circle cx="16" cy="10" r="2.2" fill="#0a0a40"/><circle cx="16" cy="16" r="2.2" fill="#0a0a40"/></svg>
<div class="a" style="left:585px;top:91px;width:26px;height:26px;background:#d4d0c8;border-top:1px solid #fff;border-left:1px solid #fff;border-right:2px solid #595959;border-bottom:2px solid #595959;box-sizing:border-box"></div>
<svg class="a" style="left:588px;top:94px;" width="20" height="20" viewBox="0 0 20 20"><path d="M2 10 L9 3 L9 7 L18 7 L18 13 L9 13 L9 17 Z" fill="#000"/></svg>
<div class="a" style="left:612px;top:91px;width:26px;height:26px;background:#d4d0c8;border-top:1px solid #fff;border-left:1px solid #fff;border-right:2px solid #595959;border-bottom:2px solid #595959;box-sizing:border-box"></div>
<svg class="a" style="left:615px;top:94px;" width="20" height="20" viewBox="0 0 20 20"><path d="M18 10 L11 3 L11 7 L2 7 L2 13 L11 13 L11 17 Z" fill="#000"/></svg>
<div class="a" style="left:943px;top:91px;width:26px;height:26px;background:#d4d0c8;border-top:1px solid #fff;border-left:1px solid #fff;border-right:2px solid #595959;border-bottom:2px solid #595959;box-sizing:border-box"></div>
<svg class="a" style="left:946px;top:94px;" width="20" height="20" viewBox="0 0 20 20"><rect x="3" y="9" width="15" height="7" rx="2" fill="#d8d8e8" stroke="#333" stroke-width="1.3"/><path d="M6 9 L7 3 L14 3 L15 9" fill="#fff" stroke="#555"/><rect x="5" y="12" width="8" height="3" fill="#f0d030"/></svg>
<div class="a" style="left:978px;top:91px;width:26px;height:26px;background:#d4d0c8;border-top:1px solid #fff;border-left:1px solid #fff;border-right:2px solid #595959;border-bottom:2px solid #595959;box-sizing:border-box"></div>
<svg class="a" style="left:981px;top:94px;" width="20" height="20" viewBox="0 0 20 20"><path d="M4 4 L16 16 M16 4 L4 16" stroke="#14147a" stroke-width="3"/></svg>
<div class="a" style="left:267px;top:127px;width:807px;height:477px;background:#fff;border-top:2px solid #3a3836;border-left:2px solid #3a3836;border-right:1px solid #3a3836;border-bottom:1px solid #3a3836;box-sizing:border-box"></div>
<div class="a" style="left:1053px;top:129px;width:20px;height:455px;background:#eceae6"></div>
<div class="a" style="left:1053px;top:129px;width:19px;height:19px;background:#d4d0c8;border-top:1px solid #fff;border-left:1px solid #fff;border-right:1px solid #8d8a86;border-bottom:1px solid #8d8a86;box-sizing:border-box"></div>
<svg class="a" style="left:1058px;top:135px;" width="8" height="5" viewBox="0 0 8 5"><path d="M0 4 L8 4 L4 0 Z" fill="#a09d98"/></svg>
<div class="a" style="left:1053px;top:566px;width:19px;height:18px;background:#d4d0c8;border-top:1px solid #fff;border-left:1px solid #fff;border-right:1px solid #8d8a86;border-bottom:2px solid #3a3836;box-sizing:border-box"></div>
<svg class="a" style="left:1058px;top:571px;" width="8" height="5" viewBox="0 0 8 5"><path d="M0 0 L8 0 L4 4 Z" fill="#a09d98"/></svg>
<div class="a" style="left:269px;top:584px;width:784px;height:19px;background:#eceae6"></div>
<div class="a" style="left:269px;top:584px;width:18px;height:19px;background:#d4d0c8;border-top:1px solid #fff;border-left:1px solid #fff;border-right:1px solid #8d8a86;border-bottom:1px solid #8d8a86;box-sizing:border-box"></div>
<svg class="a" style="left:275px;top:589px;" width="5" height="8" viewBox="0 0 5 8"><path d="M4 0 L4 8 L0 4 Z" fill="#a09d98"/></svg>
<div class="a" style="left:1036px;top:584px;width:17px;height:19px;background:#d4d0c8;border-top:1px solid #fff;border-left:1px solid #fff;border-right:1px solid #8d8a86;border-bottom:2px solid #3a3836;box-sizing:border-box"></div>
<svg class="a" style="left:1042px;top:589px;" width="5" height="8" viewBox="0 0 5 8"><path d="M0 0 L0 8 L4 4 Z" fill="#a09d98"/></svg>
<div class="a" style="left:1053px;top:584px;width:19px;height:19px;background:#fff"></div>
<div class="a" style="left:1072px;top:127px;width:2px;height:477px;background:#3a3836"></div>
<div class="a" style="left:267px;top:603px;width:807px;height:2px;background:#3a3836"></div>
<div class="a" style="left:660px;top:129px;width:1px;height:455px;background:#3f3d3b"></div>
<div class="a" style="left:269px;top:355px;width:784px;height:1px;background:#3f3d3b"></div>
<svg class="a" style="left:358px;top:186px;" width="605" height="339" viewBox="0 0 605 339"><rect x="2.5" y="2.5" width="600" height="334" fill="none" stroke="#000" stroke-width="1" stroke-dasharray="3,3"/></svg>
<div class="a" style="left:430px;top:216px;width:462px;height:279px;background:#a9a7aa;border:1px solid #3a3836;box-sizing:border-box"></div>
<div class="a" style="left:545px;top:216px;width:232px;height:279px;background:#525052;border:1px solid #2a2828;box-sizing:border-box"></div>
<svg class="a" style="left:497px;top:244px;" width="327" height="223" viewBox="0 0 327 223"><rect x="2.5" y="2.5" width="322" height="218" fill="none" stroke="#fff" stroke-width="1" stroke-dasharray="3,3"/><rect x="2.5" y="2.5" width="322" height="218" fill="none" stroke="#000" stroke-width="1" stroke-dasharray="3,3" stroke-dashoffset="3" opacity="0.6"/></svg>
<svg class="a" style="left:515px;top:340px;" width="31" height="31" viewBox="0 0 31 31"><circle cx="15.5" cy="15.5" r="14.5" fill="#000"/></svg>
<svg class="a" style="left:774px;top:340px;" width="31" height="31" viewBox="0 0 31 31"><circle cx="15.5" cy="15.5" r="14.5" fill="#000"/></svg>
<svg class="a" style="left:585px;top:280px;" width="150" height="150" viewBox="0 0 150 150"><circle cx="75" cy="75" r="70" fill="none" stroke="#fff" stroke-width="5"/><path d="M5 75 L145 75 M75 5 L75 145" stroke="#fff" stroke-width="4.5"/></svg>
<svg class="a" style="left:426px;top:208px;" width="130" height="296" viewBox="0 0 130 296"><path d="M3 3.5 L125.5 3.5 L125.5 292 L3 292" fill="none" stroke="#1a1aa8" stroke-width="2.4" stroke-dasharray="6,3"/></svg>
<div class="a" style="left:870px;top:557px;width:178px;height:26px;background:#d4d0c8"></div>
<div class="a" style="left:890px;top:558px;width:67px;height:24px;background:#d4d0c8;border-top:2px solid #b9b6b1;border-left:2px solid #b9b6b1;border-right:1px solid #f0efed;border-bottom:1px solid #f0efed;box-sizing:border-box"></div>
<div class="a" style="left:978px;top:558px;width:69px;height:24px;background:#d4d0c8;border-top:2px solid #b9b6b1;border-left:2px solid #b9b6b1;border-right:1px solid #f0efed;border-bottom:1px solid #f0efed;box-sizing:border-box"></div>
<div class="t" style="left:873px;top:566.4px;font-size:12.5px;line-height:12.5px;color:#000;font-weight:normal;">X:</div>
<div class="t" style="left:891px;top:566.4px;font-size:12.5px;line-height:12.5px;color:#000;font-weight:normal;">-0,714</div>
<div class="t" style="left:962px;top:566.4px;font-size:12.5px;line-height:12.5px;color:#000;font-weight:normal;">Y:</div>
<div class="t" style="left:979px;top:566.4px;font-size:12.5px;line-height:12.5px;color:#000;font-weight:normal;">-0,939</div>
<div class="a" style="left:266px;top:606px;width:810px;height:1px;background:#f4f3f1"></div>
<div class="a" style="left:261px;top:615px;width:816px;height:1px;background:#f4f3f1"></div>
<div class="a" style="left:260px;top:620px;width:817px;height:2px;background:#4a4848"></div>
<div class="a" style="left:261px;top:128px;width:1px;height:492px;background:#f4f3f1"></div>
<div class="a" style="left:264px;top:628px;width:763px;height:1px;background:#fdfdfd"></div>
<div class="a" style="left:264px;top:629px;width:763px;height:2px;background:#8c8985"></div>
<div class="a" style="left:264px;top:633px;width:763px;height:1px;background:#fdfdfd"></div>
<div class="a" style="left:264px;top:634px;width:763px;height:2px;background:#8c8985"></div>
<svg class="a" style="left:1036px;top:628px;" width="5" height="8" viewBox="0 0 5 8"><path d="M4 0 L4 8 L0 4 Z" fill="#8a8a8a"/></svg>
<svg class="a" style="left:1049px;top:627px;" width="10" height="10" viewBox="0 0 10 10"><rect x="2.5" y="0.5" width="5" height="5" fill="none" stroke="#000" stroke-width="1.4"/><rect x="0" y="5" width="10" height="1.6" fill="#000"/><rect x="4.3" y="6" width="1.5" height="4" fill="#000"/></svg>
<svg class="a" style="left:1066px;top:628px;" width="8" height="8" viewBox="0 0 8 8"><path d="M1 1 L7 7 M7 1 L1 7" stroke="#000" stroke-width="1.8"/></svg>
<div class="a" style="left:264px;top:642px;width:814px;height:27px;background:#f3f1ef;border-top:1px solid #a9a6a2;box-sizing:border-box"></div>
<div class="a" style="left:451px;top:643px;width:102px;height:23px;background:#fdfcfb;border-left:1px solid #a9a6a2;border-right:1px solid #a9a6a2;border-bottom:1px solid #a9a6a2;border-radius:0 0 3px 3px;box-sizing:border-box"></div>
<div class="t" style="left:295px;top:651.4px;font-size:12.5px;line-height:12.5px;color:#8a8784;font-weight:normal;">vision_training_GF Kit\100</div>
<svg class="a" style="left:269px;top:648px;" width="19" height="16" viewBox="0 0 19 16"><use href="#comp" width="19" height="16"/></svg>
<svg class="a" style="left:456px;top:648px;" width="19" height="16" viewBox="0 0 19 16"><use href="#comp" width="19" height="16"/></svg>
<div class="t" style="left:479px;top:651.4px;font-size:12.5px;line-height:12.5px;color:#000;font-weight:normal;">System\103</div>
<svg class="a" style="left:1047px;top:652px;" width="5" height="8" viewBox="0 0 5 8"><path d="M4 0 L4 8 L0 4 Z" fill="#b0ada8"/></svg>
<svg class="a" style="left:1066px;top:652px;" width="5" height="8" viewBox="0 0 5 8"><path d="M0 0 L0 8 L4 4 Z" fill="#b0ada8"/></svg>
<div class="a" style="left:1074px;top:86px;width:12px;height:42px;background:#e8e6e3"></div>
<div class="a" style="left:1075px;top:86px;width:1px;height:42px;background:#fbfaf9"></div>
<div class="a" style="left:1080px;top:128px;width:1px;height:543px;background:#fbfaf9"></div>
<div class="a" style="left:1083px;top:128px;width:1px;height:543px;background:#efedeb"></div>
<div class="a" style="left:1086px;top:86px;width:2px;height:585px;background:#4a4848"></div>
<div class="a" style="left:1091px;top:94px;width:361px;height:1px;background:#fdfdfd"></div>
<div class="a" style="left:1091px;top:95px;width:361px;height:2px;background:#8c8985"></div>
<div class="a" style="left:1091px;top:99px;width:361px;height:1px;background:#fdfdfd"></div>
<div class="a" style="left:1091px;top:100px;width:361px;height:2px;background:#8c8985"></div>
<svg class="a" style="left:1457px;top:93px;" width="8" height="5" viewBox="0 0 8 5"><path d="M0 4 L8 4 L4 0 Z" fill="#8a8a8a"/></svg>
<svg class="a" style="left:1473px;top:91px;" width="10" height="10" viewBox="0 0 10 10"><rect x="2.5" y="0.5" width="5" height="5" fill="none" stroke="#000" stroke-width="1.4"/><rect x="0" y="5" width="10" height="1.6" fill="#000"/><rect x="4.3" y="6" width="1.5" height="4" fill="#000"/></svg>
<svg class="a" style="left:1490px;top:92px;" width="8" height="8" viewBox="0 0 8 8"><path d="M1 1 L7 7 M7 1 L1 7" stroke="#000" stroke-width="1.8"/></svg>
<div class="a" style="left:1091px;top:107px;width:411px;height:526px;background:#d4d0c8;border-top:2px solid #2c2a28;border-left:3px solid #4a4846;border-right:2px solid #2c2a28;border-bottom:2px solid #2c2a28;box-sizing:border-box"></div>
<div class="a" style="left:1095px;top:109px;width:386px;height:357px;background:#fff"></div>
<div class="a" style="left:1481px;top:109px;width:18px;height:357px;background:#eceae6"></div>
<div class="a" style="left:1481px;top:110px;width:18px;height:17px;background:#d4d0c8;border-top:1px solid #fff;border-left:1px solid #fff;border-right:2px solid #595959;border-bottom:2px solid #595959;box-sizing:border-box"></div>
<svg class="a" style="left:1486px;top:115px;" width="8" height="5" viewBox="0 0 8 5"><path d="M0 4 L8 4 L4 0 Z" fill="#000"/></svg>
<div class="a" style="left:1481px;top:127px;width:18px;height:36px;background:#d4d0c8;border-top:1px solid #fff;border-left:1px solid #fff;border-right:2px solid #595959;border-bottom:2px solid #595959;box-sizing:border-box"></div>
<div class="a" style="left:1481px;top:446px;width:18px;height:19px;background:#d4d0c8;border-top:1px solid #fff;border-left:1px solid #fff;border-right:2px solid #595959;border-bottom:2px solid #595959;box-sizing:border-box"></div>
<svg class="a" style="left:1486px;top:452px;" width="8" height="5" viewBox="0 0 8 5"><path d="M0 0 L8 0 L4 4 Z" fill="#000"/></svg>
<div class="a" style="left:1095px;top:466px;width:404px;height:2px;background:#2c2a28"></div>
<div class="t" style="left:1138px;top:485.2px;font-size:12.5px;line-height:12.5px;color:#000;font-weight:normal;">Filter</div>
<div class="a" style="left:1180px;top:480px;width:227px;height:24px;background:#fff;border-top:2px solid #5a5a5a;border-left:2px solid #5a5a5a;border-right:1px solid #f4f4f4;border-bottom:1px solid #f4f4f4;box-sizing:border-box"></div>
<div class="a" style="left:1412px;top:481px;width:20px;height:19px;background:#b9b7ba;border-top:2px solid #f6f5f3;border-left:2px solid #f6f5f3;border-right:2px solid #4a4848;border-bottom:2px solid #4a4848;box-sizing:border-box"></div>
<div class="a" style="left:1440px;top:481px;width:20px;height:19px;background:#b9b7ba;border-top:2px solid #f6f5f3;border-left:2px solid #f6f5f3;border-right:2px solid #4a4848;border-bottom:2px solid #4a4848;box-sizing:border-box"></div>
<svg class="a" style="left:1414px;top:483px;" width="16" height="15" viewBox="0 0 16 15"><path d="M3 11 L5 13 L13 2" stroke="#85838a" stroke-width="1.6" fill="none"/></svg>
<svg class="a" style="left:1442px;top:483px;" width="16" height="15" viewBox="0 0 16 15"><path d="M3 2 L13 12 M13 2 L4 13" stroke="#85838a" stroke-width="1.5"/></svg>
<div class="a" style="left:1137px;top:510px;width:15px;height:15px;background:#d4d0c8;border-top:2px solid #8d8a86;border-left:2px solid #8d8a86;border-right:1px solid #fff;border-bottom:1px solid #fff;box-sizing:border-box"></div>
<svg class="a" style="left:1139px;top:512px;" width="11" height="11" viewBox="0 0 11 11"><path d="M2 5 L4.5 8 L9 2" stroke="#8d8a86" stroke-width="2" fill="none"/></svg>
<div class="t" style="left:1158px;top:514.4px;font-size:12.5px;line-height:12.5px;color:#8d8a86;font-weight:normal;">Alle Knoten b. Filtern einblenden</div>
<div class="a" style="left:1095px;top:539px;width:404px;height:1px;background:#8c8985"></div>
<div class="a" style="left:1095px;top:540px;width:404px;height:1px;background:#fdfdfd"></div>
<div class="a" style="left:1130px;top:556px;width:331px;height:61px;background:#d4d0c8;border-top:2px solid #5a5a5a;border-left:2px solid #5a5a5a;border-right:1px solid #f4f4f4;border-bottom:1px solid #f4f4f4;box-sizing:border-box"></div>
<div class="a" style="left:1088px;top:638px;width:415px;height:1px;background:#595959"></div>
<div class="a" style="left:1099px;top:639px;width:63px;height:27px;background:#d4d0c8;border-left:1px solid #fff;border-right:2px solid #595959;border-bottom:2px solid #595959;border-radius:0 0 4px 4px;box-sizing:border-box"></div>
<svg class="a" style="left:1104px;top:645px;" width="17" height="18" viewBox="0 0 17 18"><rect x="2" y="1" width="11" height="15" fill="#fff" stroke="#555" stroke-width="1.2"/><path d="M4 4 H11 M4 7 H11 M4 10 H11 M4 13 H11" stroke="#888" stroke-width="1.2"/></svg>
<div class="t" style="left:1123.5px;top:648.4px;font-size:12.5px;line-height:12.5px;color:#8a8784;font-weight:normal;">För ···</div>
<div class="a" style="left:1163px;top:639px;width:65px;height:27px;background:#d4d0c8;border-left:1px solid #fff;border-right:2px solid #595959;border-bottom:2px solid #595959;border-radius:0 0 4px 4px;box-sizing:border-box"></div>
<svg class="a" style="left:1168px;top:645px;" width="17" height="18" viewBox="0 0 17 18"><rect x="1" y="1" width="15" height="15" fill="#1a3a1a"/><rect x="2" y="2" width="6" height="6" fill="#20a020"/><rect x="9" y="2" width="6" height="6" fill="#20a020"/><rect x="2" y="9" width="6" height="6" fill="#20a020"/><rect x="9" y="9" width="6" height="6" fill="#20a020"/><text x="3" y="7.5" font-size="5" fill="#fff" font-family="Liberation Sans">1 2</text><text x="3" y="14.5" font-size="5" fill="#fff" font-family="Liberation Sans">3 4</text></svg>
<div class="t" style="left:1191.5px;top:648.4px;font-size:12.5px;line-height:12.5px;color:#8a8784;font-weight:normal;">Flä ···</div>
<div class="a" style="left:1228px;top:639px;width:66px;height:27px;background:#d4d0c8;border-left:1px solid #fff;border-right:2px solid #595959;border-bottom:2px solid #595959;border-radius:0 0 4px 4px;box-sizing:border-box"></div>
<svg class="a" style="left:1233px;top:645px;" width="17" height="18" viewBox="0 0 17 18"><rect x="2" y="8" width="13" height="7" rx="1" fill="#fff" stroke="#333" stroke-width="1.3"/><path d="M5 8 L5 4 L12 4 L12 8" fill="none" stroke="#333" stroke-width="1.2"/><rect x="6" y="1" width="5" height="3" fill="#40b8e0" stroke="#033"/><rect x="5" y="11" width="7" height="4" fill="#fff" stroke="#333"/></svg>
<div class="t" style="left:1255.7px;top:648.4px;font-size:12.5px;line-height:12.5px;color:#8a8784;font-weight:normal;">Sta ···</div>
<div class="a" style="left:1294px;top:639px;width:65px;height:27px;background:#d4d0c8;border-left:1px solid #fff;border-right:2px solid #595959;border-bottom:2px solid #595959;border-radius:0 0 4px 4px;box-sizing:border-box"></div>
<svg class="a" style="left:1299px;top:645px;" width="17" height="18" viewBox="0 0 17 18"><rect x="1" y="8" width="15" height="8" fill="#fff" stroke="#333" stroke-width="1.2"/><path d="M8.5 8 V16" stroke="#333"/><rect x="2" y="2" width="5" height="4" fill="#40b8e0" stroke="#033"/><rect x="10" y="2" width="5" height="4" fill="#40b8e0" stroke="#033"/><path d="M4 6 V8 M12 6 V8" stroke="#333"/></svg>
<div class="t" style="left:1321px;top:648.4px;font-size:12.5px;line-height:12.5px;color:#8a8784;font-weight:normal;">Lini ···</div>
<div class="a" style="left:1359px;top:639px;width:65px;height:27px;background:#d4d0c8;border-left:1px solid #fff;border-right:2px solid #595959;border-bottom:2px solid #595959;border-radius:0 0 4px 4px;box-sizing:border-box"></div>
<svg class="a" style="left:1364px;top:645px;" width="17" height="18" viewBox="0 0 17 18"><use href="#nozz" x="0.5" y="0" width="16" height="18"/></svg>
<div class="t" style="left:1388px;top:648.4px;font-size:12.5px;line-height:12.5px;color:#000;font-weight:normal;">Pip ···</div>
<div class="a" style="left:1424px;top:639px;width:68px;height:27px;background:#d4d0c8;border-left:1px solid #fff;border-right:2px solid #595959;border-bottom:2px solid #595959;border-radius:0 0 4px 4px;box-sizing:border-box"></div>
<svg class="a" style="left:1429px;top:645px;" width="17" height="18" viewBox="0 0 17 18"><rect x="1" y="3" width="15" height="11" fill="#333"/><rect x="4" y="6" width="9" height="5" fill="#fff"/></svg>
<div class="t" style="left:1453px;top:648.4px;font-size:12.5px;line-height:12.5px;color:#8a8784;font-weight:normal;">BE-···</div>
<div class="a" style="left:4px;top:682px;width:1498px;height:420px;border-top:1px solid #a9a6a2;border-left:1px solid #a9a6a2;border-bottom:1px solid #a9a6a2;box-sizing:border-box"></div>
<div class="a" style="left:15px;top:697px;width:459px;height:238px;border:1px solid #a09c98;box-shadow:1px 1px 0 #fbfbfb, inset 1px 1px 0 #fbfbfb;box-sizing:border-box"></div>
<div class="t" style="left:23.6px;top:694.4px;font-size:12.5px;line-height:12.5px;color:#000;font-weight:normal;background:#d4d0c8;padding:0 3px">Abholen</div>
<div class="t" style="left:36px;top:716.9px;font-size:12.5px;line-height:12.5px;color:#000;font-weight:normal;">Abholmodus</div>
<div class="a" style="left:165px;top:712px;width:290px;height:25px;background:#fff;border-top:2px solid #5a5a5a;border-left:2px solid #5a5a5a;border-right:1px solid #f4f4f4;border-bottom:1px solid #f4f4f4;box-sizing:border-box"></div>
<div class="a" style="left:436px;top:714px;width:18px;height:22px;background:#d4d0c8;border-top:1px solid #fff;border-left:1px solid #fff;border-right:2px solid #595959;border-bottom:2px solid #595959;box-sizing:border-box"></div>
<svg class="a" style="left:440px;top:721px;" width="8" height="5" viewBox="0 0 8 5"><path d="M0 0 L8 0 L4 4 Z" fill="#000"/></svg>
<div class="t" style="left:170px;top:720.4px;font-size:12.5px;line-height:12.5px;color:#000;font-weight:normal;">Mit Kontakt</div>
<div class="t" style="left:36px;top:746.9px;font-size:12.5px;line-height:12.5px;color:#000;font-weight:normal;">Abholkraft</div>
<div class="a" style="left:165px;top:741px;width:75px;height:25px;background:#fff;border-top:2px solid #5a5a5a;border-left:2px solid #5a5a5a;border-right:1px solid #f4f4f4;border-bottom:1px solid #f4f4f4;box-sizing:border-box"></div>
<div class="t" style="left:168px;top:749.4px;font-size:12.5px;line-height:12.5px;color:#000;font-weight:normal;">2,000</div>
<div class="t" style="left:254px;top:753.4px;font-size:12.5px;line-height:12.5px;color:#000;font-weight:normal;">N</div>
<div class="t" style="left:36px;top:776.4px;font-size:12.5px;line-height:12.5px;color:#000;font-weight:normal;">Wartezeit b. Abholen</div>
<div class="a" style="left:165px;top:771px;width:75px;height:25px;background:#fff;border-top:2px solid #5a5a5a;border-left:2px solid #5a5a5a;border-right:1px solid #f4f4f4;border-bottom:1px solid #f4f4f4;box-sizing:border-box"></div>
<div class="t" style="left:168px;top:779.4px;font-size:12.5px;line-height:12.5px;color:#000;font-weight:normal;">0</div>
<div class="t" style="left:251px;top:782.4px;font-size:12.5px;line-height:12.5px;color:#000;font-weight:normal;">ms</div>
<div class="a" style="left:24px;top:820px;width:441px;height:94px;border:1px solid #a09c98;box-shadow:1px 1px 0 #fbfbfb, inset 1px 1px 0 #fbfbfb;box-sizing:border-box"></div>
<div class="t" style="left:32px;top:816.4px;font-size:12.5px;line-height:12.5px;color:#000;font-weight:normal;background:#d4d0c8;padding:0 3px">Verfahrprofil für Abholen</div>
<div class="t" style="left:36px;top:838.4px;font-size:12.5px;line-height:12.5px;color:#000;font-weight:normal;">Abwärts</div>
<div class="a" style="left:127px;top:833px;width:328px;height:26px;background:#fff;border-top:2px solid #5a5a5a;border-left:2px solid #5a5a5a;border-right:1px solid #f4f4f4;border-bottom:1px solid #f4f4f4;box-sizing:border-box"></div>
<div class="a" style="left:436px;top:835px;width:18px;height:23px;background:#d4d0c8;border-top:1px solid #fff;border-left:1px solid #fff;border-right:2px solid #595959;border-bottom:2px solid #595959;box-sizing:border-box"></div>
<svg class="a" style="left:440px;top:843px;" width="8" height="5" viewBox="0 0 8 5"><path d="M0 0 L8 0 L4 4 Z" fill="#000"/></svg>
<div class="t" style="left:132px;top:841.9px;font-size:12.5px;line-height:12.5px;color:#000;font-weight:normal;">1 – Abwärts – Abholen, Standard</div>
<div class="t" style="left:36px;top:876.4px;font-size:12.5px;line-height:12.5px;color:#000;font-weight:normal;">Aufwärts</div>
<div class="a" style="left:127px;top:869px;width:328px;height:26px;background:#fff;border-top:2px solid #5a5a5a;border-left:2px solid #5a5a5a;border-right:1px solid #f4f4f4;border-bottom:1px solid #f4f4f4;box-sizing:border-box"></div>
<div class="a" style="left:436px;top:871px;width:18px;height:23px;background:#d4d0c8;border-top:1px solid #fff;border-left:1px solid #fff;border-right:2px solid #595959;border-bottom:2px solid #595959;box-sizing:border-box"></div>
<svg class="a" style="left:440px;top:879px;" width="8" height="5" viewBox="0 0 8 5"><path d="M0 0 L8 0 L4 4 Z" fill="#000"/></svg>
<div class="t" style="left:132px;top:877.9px;font-size:12.5px;line-height:12.5px;color:#000;font-weight:normal;">2 – Abholen, Standard</div>
<div class="a" style="left:476px;top:698px;width:440px;height:237px;border:1px solid #a09c98;box-shadow:1px 1px 0 #fbfbfb, inset 1px 1px 0 #fbfbfb;box-sizing:border-box"></div>
<div class="t" style="left:484.3px;top:694.4px;font-size:12.5px;line-height:12.5px;color:#000;font-weight:normal;background:#d4d0c8;padding:0 3px">Bestücken</div>
<div class="t" style="left:506px;top:712.4px;font-size:12.5px;line-height:12.5px;color:#000;font-weight:normal;">Wartezeit b. Bestücken</div>
<div class="a" style="left:653px;top:709px;width:75px;height:25px;background:#fff;border-top:2px solid #5a5a5a;border-left:2px solid #5a5a5a;border-right:1px solid #f4f4f4;border-bottom:1px solid #f4f4f4;box-sizing:border-box"></div>
<div class="t" style="left:656px;top:717.4px;font-size:12.5px;line-height:12.5px;color:#000;font-weight:normal;">0</div>
<div class="t" style="left:740px;top:721.4px;font-size:12.5px;line-height:12.5px;color:#000;font-weight:normal;">ms</div>
<div class="a" style="left:484px;top:742px;width:414px;height:72px;border:1px solid #a09c98;box-shadow:1px 1px 0 #fbfbfb, inset 1px 1px 0 #fbfbfb;box-sizing:border-box"></div>
<div class="t" style="left:493.5px;top:738.4px;font-size:12.5px;line-height:12.5px;color:#000;font-weight:normal;background:#d4d0c8;padding:0 3px">Blasluft</div>
<div class="t" style="left:534px;top:752.4px;font-size:12.5px;line-height:12.5px;color:#000;font-weight:normal;">Bestücken</div>
<div class="a" style="left:653px;top:748px;width:75px;height:27px;background:#fff;border-top:2px solid #5a5a5a;border-left:2px solid #5a5a5a;border-right:1px solid #f4f4f4;border-bottom:1px solid #f4f4f4;box-sizing:border-box"></div>
<div class="t" style="left:656px;top:757.4px;font-size:12.5px;line-height:12.5px;color:#000;font-weight:normal;">150</div>
<div class="t" style="left:740px;top:761.4px;font-size:12.5px;line-height:12.5px;color:#000;font-weight:normal;">mbar</div>
<div class="t" style="left:534px;top:782.4px;font-size:12.5px;line-height:12.5px;color:#000;font-weight:normal;">Ablegen</div>
<div class="a" style="left:653px;top:777px;width:75px;height:26px;background:#fff;border-top:2px solid #5a5a5a;border-left:2px solid #5a5a5a;border-right:1px solid #f4f4f4;border-bottom:1px solid #f4f4f4;box-sizing:border-box"></div>
<div class="t" style="left:656px;top:785.9px;font-size:12.5px;line-height:12.5px;color:#000;font-weight:normal;">150</div>
<div class="t" style="left:740px;top:789.4px;font-size:12.5px;line-height:12.5px;color:#000;font-weight:normal;">mbar</div>
<div class="a" style="left:484px;top:832px;width:423px;height:95px;border:1px solid #a09c98;box-shadow:1px 1px 0 #fbfbfb, inset 1px 1px 0 #fbfbfb;box-sizing:border-box"></div>
<div class="t" style="left:493.5px;top:828.4px;font-size:12.5px;line-height:12.5px;color:#000;font-weight:normal;background:#d4d0c8;padding:0 3px">Verfahrprofil für Bestücken</div>
<div class="t" style="left:496.5px;top:852.4px;font-size:12.5px;line-height:12.5px;color:#000;font-weight:normal;">Abwärts</div>
<div class="a" style="left:588px;top:846px;width:309px;height:25px;background:#fff;border-top:2px solid #5a5a5a;border-left:2px solid #5a5a5a;border-right:1px solid #f4f4f4;border-bottom:1px solid #f4f4f4;box-sizing:border-box"></div>
<div class="a" style="left:878px;top:848px;width:18px;height:22px;background:#d4d0c8;border-top:1px solid #fff;border-left:1px solid #fff;border-right:2px solid #595959;border-bottom:2px solid #595959;box-sizing:border-box"></div>
<svg class="a" style="left:882px;top:855px;" width="8" height="5" viewBox="0 0 8 5"><path d="M0 0 L8 0 L4 4 Z" fill="#000"/></svg>
<div class="t" style="left:593px;top:854.4px;font-size:12.5px;line-height:12.5px;color:#000;font-weight:normal;">5 – Abwärts – Bestücken, Standard</div>
<div class="t" style="left:496.5px;top:897.4px;font-size:12.5px;line-height:12.5px;color:#000;font-weight:normal;">Aufwärts</div>
<div class="a" style="left:588px;top:891px;width:309px;height:25px;background:#fff;border-top:2px solid #5a5a5a;border-left:2px solid #5a5a5a;border-right:1px solid #f4f4f4;border-bottom:1px solid #f4f4f4;box-sizing:border-box"></div>
<div class="a" style="left:878px;top:893px;width:18px;height:22px;background:#d4d0c8;border-top:1px solid #fff;border-left:1px solid #fff;border-right:2px solid #595959;border-bottom:2px solid #595959;box-sizing:border-box"></div>
<svg class="a" style="left:882px;top:900px;" width="8" height="5" viewBox="0 0 8 5"><path d="M0 0 L8 0 L4 4 Z" fill="#000"/></svg>
<div class="t" style="left:593px;top:899.4px;font-size:12.5px;line-height:12.5px;color:#000;font-weight:normal;">9 – Aufwärts – Bestücken, Standard</div>
<div class="a" style="left:928px;top:698px;width:440px;height:107px;border:1px solid #a09c98;box-shadow:1px 1px 0 #fbfbfb, inset 1px 1px 0 #fbfbfb;box-sizing:border-box"></div>
<div class="t" style="left:935px;top:694.4px;font-size:12.5px;line-height:12.5px;color:#000;font-weight:normal;background:#d4d0c8;padding:0 3px">BE-Anwesenheit überprüfen</div>
<div class="a" style="left:964px;top:726px;width:15px;height:15px;background:#fff;border-top:2px solid #5a5a5a;border-left:2px solid #5a5a5a;border-right:1px solid #fff;border-bottom:1px solid #fff;box-sizing:border-box"></div>
<svg class="a" style="left:966px;top:728px;" width="11" height="11" viewBox="0 0 11 11"><path d="M2 5 L4.5 8 L9 2" stroke="#000" stroke-width="2" fill="none"/></svg>
<div class="t" style="left:986px;top:730.4px;font-size:12.5px;line-height:12.5px;color:#000;font-weight:normal;">Abholen</div>
<div class="a" style="left:964px;top:766px;width:15px;height:15px;background:#fff;border-top:2px solid #5a5a5a;border-left:2px solid #5a5a5a;border-right:1px solid #fff;border-bottom:1px solid #fff;box-sizing:border-box"></div>
<svg class="a" style="left:966px;top:768px;" width="11" height="11" viewBox="0 0 11 11"><path d="M2 5 L4.5 8 L9 2" stroke="#000" stroke-width="2" fill="none"/></svg>
<div class="t" style="left:986px;top:770.4px;font-size:12.5px;line-height:12.5px;color:#000;font-weight:normal;">Bestücken</div>
<div class="a" style="left:1096px;top:763px;width:233px;height:26px;background:#fff;border-top:2px solid #5a5a5a;border-left:2px solid #5a5a5a;border-right:1px solid #f4f4f4;border-bottom:1px solid #f4f4f4;box-sizing:border-box"></div>
<div class="a" style="left:1310px;top:765px;width:18px;height:23px;background:#d4d0c8;border-top:1px solid #fff;border-left:1px solid #fff;border-right:2px solid #595959;border-bottom:2px solid #595959;box-sizing:border-box"></div>
<svg class="a" style="left:1314px;top:773px;" width="8" height="5" viewBox="0 0 8 5"><path d="M0 0 L8 0 L4 4 Z" fill="#000"/></svg>
<div class="t" style="left:1101px;top:771.9px;font-size:12.5px;line-height:12.5px;color:#000;font-weight:normal;">Normal</div>
<div class="a" style="left:928px;top:823px;width:289px;height:112px;border:1px solid #a09c98;box-shadow:1px 1px 0 #fbfbfb, inset 1px 1px 0 #fbfbfb;box-sizing:border-box"></div>
<div class="t" style="left:935px;top:819.4px;font-size:12.5px;line-height:12.5px;color:#000;font-weight:normal;background:#d4d0c8;padding:0 3px">Dippen</div>
<div class="t" style="left:938px;top:844.4px;font-size:12.5px;line-height:12.5px;color:#000;font-weight:normal;">Modus</div>
<div class="a" style="left:1021px;top:840px;width:177px;height:25px;background:#fff;border-top:2px solid #5a5a5a;border-left:2px solid #5a5a5a;border-right:1px solid #f4f4f4;border-bottom:1px solid #f4f4f4;box-sizing:border-box"></div>
<div class="a" style="left:1179px;top:842px;width:18px;height:22px;background:#d4d0c8;border-top:1px solid #fff;border-left:1px solid #fff;border-right:2px solid #595959;border-bottom:2px solid #595959;box-sizing:border-box"></div>
<svg class="a" style="left:1183px;top:849px;" width="8" height="5" viewBox="0 0 8 5"><path d="M0 0 L8 0 L4 4 Z" fill="#000"/></svg>
<div class="t" style="left:1026px;top:848.4px;font-size:12.5px;line-height:12.5px;color:#000;font-weight:normal;">Kein Dippen</div>
<div class="t" style="left:938px;top:882.4px;font-size:12.5px;line-height:12.5px;color:#000;font-weight:normal;">Haltezeit</div>
<div class="a" style="left:1021px;top:877px;width:159px;height:26px;background:#fff;border-top:2px solid #5a5a5a;border-left:2px solid #5a5a5a;border-right:1px solid #f4f4f4;border-bottom:1px solid #f4f4f4;box-sizing:border-box"></div>
<div class="t" style="left:1024px;top:885.9px;font-size:12.5px;line-height:12.5px;color:#000;font-weight:normal;">0</div>
<div class="t" style="left:1182px;top:883.4px;font-size:12.5px;line-height:12.5px;color:#000;font-weight:normal;">ms</div>
<div class="a" style="left:4px;top:1104px;width:1499px;height:25px;background:#f3f1ef"></div>
<div class="a" style="left:63px;top:1107px;width:1px;height:18px;background:#9a9793"></div>
<div class="a" style="left:143px;top:1107px;width:1px;height:18px;background:#9a9793"></div>
<div class="a" style="left:285px;top:1107px;width:1px;height:18px;background:#9a9793"></div>
<div class="a" style="left:484px;top:1107px;width:1px;height:18px;background:#9a9793"></div>
<div class="a" style="left:543px;top:1107px;width:1px;height:18px;background:#9a9793"></div>
<div class="a" style="left:603px;top:1107px;width:1px;height:18px;background:#9a9793"></div>
<div class="a" style="left:702px;top:1107px;width:1px;height:18px;background:#9a9793"></div>
<div class="a" style="left:1069px;top:1107px;width:1px;height:18px;background:#9a9793"></div>
<div class="t" style="left:10.6px;top:1113.1px;font-size:11.7px;line-height:11.7px;color:#8a8784;font-weight:normal;">Hinweise</div>
<div class="t" style="left:70.5px;top:1113.1px;font-size:11.7px;line-height:11.7px;color:#8a8784;font-weight:normal;">System \ 103</div>
<div class="t" style="left:152.3px;top:1113.1px;font-size:11.7px;line-height:11.7px;color:#8a8784;font-weight:normal;">ICOS Beinchengruppen</div>
<div class="t" style="left:294.6px;top:1113.1px;font-size:11.7px;line-height:11.7px;color:#8a8784;font-weight:normal;">SIPLACE Vision Beinchengruppen</div>
<div class="t" style="left:490.7px;top:1113.1px;font-size:11.7px;line-height:11.7px;color:#8a8784;font-weight:normal;">Pipetten</div>
<div class="t" style="left:551px;top:1113.1px;font-size:11.7px;line-height:11.7px;color:#8a8784;font-weight:normal;">Kameras</div>
<div class="t" style="left:610.7px;top:1113.1px;font-size:11.7px;line-height:11.7px;color:#8a8784;font-weight:normal;">Beschleunigung</div>
<div class="t" style="left:711.7px;top:1113.1px;font-size:11.7px;line-height:11.7px;color:#8a8784;font-weight:normal;">Grundlegende Bearbeitung</div>
<div class="t" style="left:1015px;top:1113.1px;font-size:11.7px;line-height:11.7px;color:#8a8784;font-weight:normal;">Förderer</div>
<div class="t" style="left:1075.6px;top:1113.1px;font-size:11.7px;line-height:11.7px;color:#8a8784;font-weight:normal;">Kommunikation</div>
<div class="a" style="left:870px;top:1102px;width:140px;height:25px;background:#fdfcfb;border-left:1px solid #a9a6a2;border-right:1px solid #a9a6a2;border-bottom:1px solid #a9a6a2;border-radius:0 0 3px 3px;box-sizing:border-box"></div>
<div class="t" style="left:875.6px;top:1112.4px;font-size:12.5px;line-height:12.5px;color:#000;font-weight:normal;">Erweiterte Bearbeitung</div>
<div class="a" style="left:2px;top:1132px;width:1501px;height:1px;background:#fdfdfd"></div>
<div class="a" style="left:2px;top:1137px;width:1501px;height:2px;background:#4a4848"></div>
<div class="t" style="left:9.3px;top:1146.4px;font-size:12.5px;line-height:12.5px;color:#000;font-weight:normal;">Drücken Sie F1, um die Hilfe aufzurufen.</div>
<svg class="a" style="left:1060px;top:1141px;" width="16" height="18" viewBox="0 0 16 18"><circle cx="8" cy="6" r="5" fill="#fff" stroke="#000" stroke-width="1.5"/><path d="M3 5 Q8 -1 13 5 L10 6 Z" fill="#000"/><path d="M1 17 Q8 9 15 17 Z" fill="#1414b4"/></svg>
<div class="t" style="left:1080px;top:1146.4px;font-size:12.5px;line-height:12.5px;color:#000;font-weight:normal;">Benutzer</div>
<div class="a" style="left:2px;top:1169px;width:1501px;height:1px;background:#f0efed"></div>
<div class="a" style="left:1503px;top:1100px;width:100px;height:80px;background:#fff"></div>
<div class="a" style="left:43px;top:109px;width:1px;height:5px;background:repeating-linear-gradient(to bottom,#a0a0a0 0 1px,transparent 1px 2px)"></div>
<div class="a" style="left:43px;top:124px;width:1px;height:323px;background:repeating-linear-gradient(to bottom,#a0a0a0 0 1px,transparent 1px 2px)"></div>
<div class="a" style="left:38px;top:114px;width:10px;height:10px;background:#fff;border:1px solid #8e8e8e;box-sizing:border-box"></div>
<div class="a" style="left:40px;top:118px;width:6px;height:2px;background:#222"></div>
<div class="a" style="left:48px;top:119px;width:8px;height:1px;background:repeating-linear-gradient(to right,#a0a0a0 0 1px,transparent 1px 2px)"></div>
<svg class="a" style="left:55px;top:111px" width="19" height="16"><use href="#fold" width="19" height="16"/></svg>
<div class="t" style="left:80px;top:114.6px;font-size:12.5px;line-height:12.5px;color:#000;font-weight:normal;">System</div>
<div class="a" style="left:66px;top:127px;width:1px;height:320px;background:repeating-linear-gradient(to bottom,#a0a0a0 0 1px,transparent 1px 2px)"></div>
<div class="a" style="left:66px;top:138px;width:13px;height:1px;background:repeating-linear-gradient(to right,#a0a0a0 0 1px,transparent 1px 2px)"></div>
<svg class="a" style="left:79px;top:130px" width="18" height="16"><use href="#comp" width="18" height="16"/></svg>
<div class="t" style="left:102.5px;top:133.3px;font-size:12.5px;line-height:12.5px;color:#000;font-weight:normal;">1</div>
<div class="a" style="left:66px;top:157px;width:13px;height:1px;background:repeating-linear-gradient(to right,#a0a0a0 0 1px,transparent 1px 2px)"></div>
<svg class="a" style="left:79px;top:149px" width="18" height="16"><use href="#comp" width="18" height="16"/></svg>
<div class="t" style="left:102.5px;top:152.2px;font-size:12.5px;line-height:12.5px;color:#000;font-weight:normal;">2</div>
<div class="a" style="left:66px;top:175px;width:13px;height:1px;background:repeating-linear-gradient(to right,#a0a0a0 0 1px,transparent 1px 2px)"></div>
<svg class="a" style="left:79px;top:167px" width="18" height="16"><use href="#comp" width="18" height="16"/></svg>
<div class="t" style="left:102.5px;top:171.0px;font-size:12.5px;line-height:12.5px;color:#000;font-weight:normal;">3</div>
<div class="a" style="left:66px;top:194px;width:13px;height:1px;background:repeating-linear-gradient(to right,#a0a0a0 0 1px,transparent 1px 2px)"></div>
<svg class="a" style="left:79px;top:186px" width="18" height="16"><use href="#comp" width="18" height="16"/></svg>
<div class="t" style="left:102.5px;top:189.8px;font-size:12.5px;line-height:12.5px;color:#000;font-weight:normal;">10</div>
<div class="a" style="left:66px;top:213px;width:13px;height:1px;background:repeating-linear-gradient(to right,#a0a0a0 0 1px,transparent 1px 2px)"></div>
<svg class="a" style="left:79px;top:205px" width="18" height="16"><use href="#comp" width="18" height="16"/></svg>
<div class="t" style="left:102.5px;top:208.7px;font-size:12.5px;line-height:12.5px;color:#000;font-weight:normal;">11</div>
<div class="a" style="left:66px;top:232px;width:13px;height:1px;background:repeating-linear-gradient(to right,#a0a0a0 0 1px,transparent 1px 2px)"></div>
<svg class="a" style="left:79px;top:224px" width="18" height="16"><use href="#comp" width="18" height="16"/></svg>
<div class="t" style="left:102.5px;top:227.5px;font-size:12.5px;line-height:12.5px;color:#000;font-weight:normal;">12</div>
<div class="a" style="left:66px;top:251px;width:13px;height:1px;background:repeating-linear-gradient(to right,#a0a0a0 0 1px,transparent 1px 2px)"></div>
<svg class="a" style="left:79px;top:243px" width="18" height="16"><use href="#comp" width="18" height="16"/></svg>
<svg class="a" style="left:75px;top:251px;" width="9" height="7" viewBox="0 0 9 7"><rect x="0.5" y="0.5" width="8" height="6" fill="#ccc" stroke="#000"/><path d="M2 5 L4 2 L7 5" stroke="#000" fill="none"/></svg>
<div class="t" style="left:102.5px;top:246.3px;font-size:12.5px;line-height:12.5px;color:#000;font-weight:normal;">96</div>
<div class="a" style="left:66px;top:270px;width:13px;height:1px;background:repeating-linear-gradient(to right,#a0a0a0 0 1px,transparent 1px 2px)"></div>
<svg class="a" style="left:79px;top:262px" width="18" height="16"><use href="#comp" width="18" height="16"/></svg>
<div class="t" style="left:102.5px;top:265.2px;font-size:12.5px;line-height:12.5px;color:#000;font-weight:normal;">97</div>
<div class="a" style="left:66px;top:288px;width:13px;height:1px;background:repeating-linear-gradient(to right,#a0a0a0 0 1px,transparent 1px 2px)"></div>
<svg class="a" style="left:79px;top:280px" width="18" height="16"><use href="#comp" width="18" height="16"/></svg>
<div class="t" style="left:102.5px;top:284.0px;font-size:12.5px;line-height:12.5px;color:#000;font-weight:normal;">98</div>
<div class="a" style="left:66px;top:307px;width:13px;height:1px;background:repeating-linear-gradient(to right,#a0a0a0 0 1px,transparent 1px 2px)"></div>
<svg class="a" style="left:79px;top:299px" width="18" height="16"><use href="#comp" width="18" height="16"/></svg>
<div class="t" style="left:102.5px;top:302.8px;font-size:12.5px;line-height:12.5px;color:#000;font-weight:normal;">99</div>
<div class="a" style="left:66px;top:326px;width:13px;height:1px;background:repeating-linear-gradient(to right,#a0a0a0 0 1px,transparent 1px 2px)"></div>
<svg class="a" style="left:79px;top:318px" width="18" height="16"><use href="#comp" width="18" height="16"/></svg>
<div class="t" style="left:102.5px;top:321.6px;font-size:12.5px;line-height:12.5px;color:#000;font-weight:normal;">100</div>
<div class="a" style="left:66px;top:345px;width:13px;height:1px;background:repeating-linear-gradient(to right,#a0a0a0 0 1px,transparent 1px 2px)"></div>
<svg class="a" style="left:79px;top:337px" width="18" height="16"><use href="#comp" width="18" height="16"/></svg>
<div class="t" style="left:102.5px;top:340.5px;font-size:12.5px;line-height:12.5px;color:#000;font-weight:normal;">101</div>
<div class="a" style="left:66px;top:364px;width:13px;height:1px;background:repeating-linear-gradient(to right,#a0a0a0 0 1px,transparent 1px 2px)"></div>
<svg class="a" style="left:79px;top:356px" width="18" height="16"><use href="#comp" width="18" height="16"/></svg>
<div class="t" style="left:102.5px;top:359.3px;font-size:12.5px;line-height:12.5px;color:#000;font-weight:normal;">102</div>
<div class="a" style="left:66px;top:383px;width:13px;height:1px;background:repeating-linear-gradient(to right,#a0a0a0 0 1px,transparent 1px 2px)"></div>
<div class="a" style="left:100px;top:373px;width:29px;height:19px;background:#d4d0c8"></div>
<svg class="a" style="left:79px;top:375px" width="18" height="16"><use href="#comp" width="18" height="16"/></svg>
<div class="t" style="left:102.5px;top:378.1px;font-size:12.5px;line-height:12.5px;color:#000;font-weight:normal;">103</div>
<div class="a" style="left:66px;top:401px;width:13px;height:1px;background:repeating-linear-gradient(to right,#a0a0a0 0 1px,transparent 1px 2px)"></div>
<svg class="a" style="left:79px;top:393px" width="18" height="16"><use href="#comp" width="18" height="16"/></svg>
<div class="t" style="left:102.5px;top:397.0px;font-size:12.5px;line-height:12.5px;color:#000;font-weight:normal;">105</div>
<div class="a" style="left:66px;top:420px;width:13px;height:1px;background:repeating-linear-gradient(to right,#a0a0a0 0 1px,transparent 1px 2px)"></div>
<svg class="a" style="left:79px;top:412px" width="18" height="16"><use href="#comp" width="18" height="16"/></svg>
<div class="t" style="left:102.5px;top:415.8px;font-size:12.5px;line-height:12.5px;color:#000;font-weight:normal;">106</div>
<div class="a" style="left:66px;top:439px;width:13px;height:1px;background:repeating-linear-gradient(to right,#a0a0a0 0 1px,transparent 1px 2px)"></div>
<svg class="a" style="left:79px;top:431px" width="18" height="16"><use href="#comp" width="18" height="16"/></svg>
<div class="t" style="left:102.5px;top:434.6px;font-size:12.5px;line-height:12.5px;color:#000;font-weight:normal;">110</div>
<div class="a" style="left:1103px;top:114px;width:10px;height:10px;background:#fff;border:1px solid #8e8e8e;box-sizing:border-box"></div>
<div class="a" style="left:1105px;top:118px;width:6px;height:2px;background:#222"></div>
<div class="a" style="left:1113px;top:119px;width:8px;height:1px;background:repeating-linear-gradient(to right,#a0a0a0 0 1px,transparent 1px 2px)"></div>
<svg class="a" style="left:1120px;top:111px" width="19" height="16"><use href="#fold" width="19" height="16"/></svg>
<div class="a" style="left:1143px;top:109px;width:127px;height:19px;background:#d4d0c8"></div>
<div class="t" style="left:1145.5px;top:114.6px;font-size:12.5px;line-height:12.5px;color:#000;font-weight:normal;">Eigene Pipettentypen</div>
<div class="a" style="left:1130px;top:127px;width:1px;height:339px;background:repeating-linear-gradient(to bottom,#a0a0a0 0 1px,transparent 1px 2px)"></div>
<div class="a" style="left:1131px;top:138px;width:12px;height:1px;background:repeating-linear-gradient(to right,#a0a0a0 0 1px,transparent 1px 2px)"></div>
<div class="a" style="left:1125px;top:133px;width:10px;height:10px;background:#fff;border:1px solid #8e8e8e;box-sizing:border-box"></div>
<div class="a" style="left:1127px;top:137px;width:6px;height:2px;background:#222"></div>
<div class="a" style="left:1129px;top:135px;width:2px;height:6px;background:#222"></div>
<svg class="a" style="left:1142px;top:130px" width="19" height="16"><use href="#fold" width="19" height="16"/></svg>
<div class="t" style="left:1168px;top:133.3px;font-size:12.5px;line-height:12.5px;color:#000;font-weight:normal;">Import</div>
<div class="a" style="left:1131px;top:157px;width:12px;height:1px;background:repeating-linear-gradient(to right,#a0a0a0 0 1px,transparent 1px 2px)"></div>
<div class="a" style="left:1125px;top:152px;width:10px;height:10px;background:#fff;border:1px solid #8e8e8e;box-sizing:border-box"></div>
<div class="a" style="left:1127px;top:156px;width:6px;height:2px;background:#222"></div>
<div class="a" style="left:1129px;top:154px;width:2px;height:6px;background:#222"></div>
<svg class="a" style="left:1142px;top:149px" width="19" height="16"><use href="#fold" width="19" height="16"/></svg>
<div class="t" style="left:1168px;top:152.2px;font-size:12.5px;line-height:12.5px;color:#000;font-weight:normal;">Sonderpipetten_test</div>
<div class="a" style="left:1131px;top:175px;width:12px;height:1px;background:repeating-linear-gradient(to right,#a0a0a0 0 1px,transparent 1px 2px)"></div>
<svg class="a" style="left:1142px;top:167px" width="19" height="16"><use href="#fold" width="19" height="16"/></svg>
<div class="t" style="left:1168px;top:171.0px;font-size:12.5px;line-height:12.5px;color:#000;font-weight:normal;">System</div>
<div class="a" style="left:1131px;top:194px;width:12px;height:1px;background:repeating-linear-gradient(to right,#a0a0a0 0 1px,transparent 1px 2px)"></div>
<div class="a" style="left:1125px;top:189px;width:10px;height:10px;background:#fff;border:1px solid #8e8e8e;box-sizing:border-box"></div>
<div class="a" style="left:1127px;top:193px;width:6px;height:2px;background:#222"></div>
<div class="a" style="left:1129px;top:191px;width:2px;height:6px;background:#222"></div>
<svg class="a" style="left:1142px;top:186px" width="19" height="16"><use href="#fold" width="19" height="16"/></svg>
<div class="t" style="left:1168px;top:189.8px;font-size:12.5px;line-height:12.5px;color:#000;font-weight:normal;">Test_nozzles for copl</div>
<div class="a" style="left:1131px;top:213px;width:12px;height:1px;background:repeating-linear-gradient(to right,#a0a0a0 0 1px,transparent 1px 2px)"></div>
<div class="a" style="left:1125px;top:208px;width:10px;height:10px;background:#fff;border:1px solid #8e8e8e;box-sizing:border-box"></div>
<div class="a" style="left:1127px;top:212px;width:6px;height:2px;background:#222"></div>
<div class="a" style="left:1129px;top:210px;width:2px;height:6px;background:#222"></div>
<svg class="a" style="left:1142px;top:205px" width="19" height="16"><use href="#fold" width="19" height="16"/></svg>
<div class="t" style="left:1168px;top:208.7px;font-size:12.5px;line-height:12.5px;color:#000;font-weight:normal;">Thomas</div>
<div class="a" style="left:1131px;top:232px;width:13px;height:1px;background:repeating-linear-gradient(to right,#a0a0a0 0 1px,transparent 1px 2px)"></div>
<svg class="a" style="left:1144px;top:222px" width="16" height="19"><use href="#nozz" width="16" height="19"/></svg>
<div class="t" style="left:1167px;top:227.5px;font-size:12.5px;line-height:12.5px;color:#000;font-weight:normal;">412 PP</div>
<div class="a" style="left:1131px;top:251px;width:13px;height:1px;background:repeating-linear-gradient(to right,#a0a0a0 0 1px,transparent 1px 2px)"></div>
<svg class="a" style="left:1144px;top:241px" width="16" height="19"><use href="#nozz" width="16" height="19"/></svg>
<div class="t" style="left:1167px;top:246.3px;font-size:12.5px;line-height:12.5px;color:#000;font-weight:normal;">416 PP</div>
<div class="a" style="left:1131px;top:270px;width:13px;height:1px;background:repeating-linear-gradient(to right,#a0a0a0 0 1px,transparent 1px 2px)"></div>
<svg class="a" style="left:1144px;top:260px" width="16" height="19"><use href="#nozz" width="16" height="19"/></svg>
<div class="t" style="left:1167px;top:265.2px;font-size:12.5px;line-height:12.5px;color:#000;font-weight:normal;">417 PP</div>
<div class="a" style="left:1131px;top:288px;width:13px;height:1px;background:repeating-linear-gradient(to right,#a0a0a0 0 1px,transparent 1px 2px)"></div>
<svg class="a" style="left:1144px;top:278px" width="16" height="19"><use href="#nozz" width="16" height="19"/></svg>
<div class="t" style="left:1167px;top:284.0px;font-size:12.5px;line-height:12.5px;color:#000;font-weight:normal;">418 PP</div>
<div class="a" style="left:1131px;top:307px;width:13px;height:1px;background:repeating-linear-gradient(to right,#a0a0a0 0 1px,transparent 1px 2px)"></div>
<svg class="a" style="left:1144px;top:297px" width="16" height="19"><use href="#nozz" width="16" height="19"/></svg>
<div class="t" style="left:1167px;top:302.8px;font-size:12.5px;line-height:12.5px;color:#000;font-weight:normal;">419 PP</div>
<div class="a" style="left:1131px;top:326px;width:13px;height:1px;background:repeating-linear-gradient(to right,#a0a0a0 0 1px,transparent 1px 2px)"></div>
<svg class="a" style="left:1144px;top:316px" width="16" height="19"><use href="#nozz" width="16" height="19"/></svg>
<div class="t" style="left:1167px;top:321.6px;font-size:12.5px;line-height:12.5px;color:#000;font-weight:normal;">451 PP</div>
<div class="a" style="left:1131px;top:345px;width:13px;height:1px;background:repeating-linear-gradient(to right,#a0a0a0 0 1px,transparent 1px 2px)"></div>
<svg class="a" style="left:1144px;top:335px" width="16" height="19"><use href="#nozz" width="16" height="19"/></svg>
<div class="t" style="left:1167px;top:340.5px;font-size:12.5px;line-height:12.5px;color:#000;font-weight:normal;">452 PP</div>
<div class="a" style="left:1131px;top:364px;width:13px;height:1px;background:repeating-linear-gradient(to right,#a0a0a0 0 1px,transparent 1px 2px)"></div>
<svg class="a" style="left:1144px;top:354px" width="16" height="19"><use href="#nozz" width="16" height="19"/></svg>
<div class="t" style="left:1167px;top:359.3px;font-size:12.5px;line-height:12.5px;color:#000;font-weight:normal;">453 PP</div>
<div class="a" style="left:1131px;top:383px;width:13px;height:1px;background:repeating-linear-gradient(to right,#a0a0a0 0 1px,transparent 1px 2px)"></div>
<svg class="a" style="left:1144px;top:373px" width="16" height="19"><use href="#nozz" width="16" height="19"/></svg>
<div class="t" style="left:1167px;top:378.1px;font-size:12.5px;line-height:12.5px;color:#000;font-weight:normal;">454 PP</div>
<div class="a" style="left:1131px;top:401px;width:13px;height:1px;background:repeating-linear-gradient(to right,#a0a0a0 0 1px,transparent 1px 2px)"></div>
<svg class="a" style="left:1144px;top:391px" width="16" height="19"><use href="#nozz" width="16" height="19"/></svg>
<div class="t" style="left:1167px;top:397.0px;font-size:12.5px;line-height:12.5px;color:#000;font-weight:normal;">455 PP</div>
<div class="a" style="left:1131px;top:420px;width:13px;height:1px;background:repeating-linear-gradient(to right,#a0a0a0 0 1px,transparent 1px 2px)"></div>
<svg class="a" style="left:1144px;top:410px" width="16" height="19"><use href="#nozz" width="16" height="19"/></svg>
<div class="t" style="left:1167px;top:415.8px;font-size:12.5px;line-height:12.5px;color:#000;font-weight:normal;">456 PP</div>
<div class="a" style="left:1131px;top:439px;width:13px;height:1px;background:repeating-linear-gradient(to right,#a0a0a0 0 1px,transparent 1px 2px)"></div>
<svg class="a" style="left:1144px;top:429px" width="16" height="19"><use href="#nozz" width="16" height="19"/></svg>
<div class="t" style="left:1167px;top:434.6px;font-size:12.5px;line-height:12.5px;color:#000;font-weight:normal;">490 PP</div>
<div class="a" style="left:1131px;top:458px;width:13px;height:1px;background:repeating-linear-gradient(to right,#a0a0a0 0 1px,transparent 1px 2px)"></div>
<svg class="a" style="left:1144px;top:448px" width="16" height="19"><use href="#nozz" width="16" height="19"/></svg>
<div class="t" style="left:1167px;top:453.5px;font-size:12.5px;line-height:12.5px;color:#000;font-weight:normal;">491 PP</div>
<div class="a" style="left:493px;top:683px;width:335px;height:124px;border:4px solid #c0077c;box-sizing:border-box"></div>
<div class="a" style="left:1061px;top:753px;width:277px;height:47px;border:4px solid #c0077c;box-sizing:border-box"></div>
<div class="a" style="left:923px;top:798px;width:294px;height:121px;border:4px solid #c0077c;box-sizing:border-box"></div>
<div class="a" style="left:854px;top:282px;width:3px;height:465px;background:#fff"></div>
<div class="a" style="left:852px;top:282px;width:2px;height:465px;background:#c0077c"></div>
<div class="a" style="left:852px;top:285px;width:679px;height:2px;background:#fff"></div>
<div class="a" style="left:852px;top:282px;width:679px;height:3px;background:#c0077c"></div>
<div class="a" style="left:828px;top:747px;width:27px;height:2px;background:#fff"></div>
<div class="a" style="left:828px;top:744px;width:27px;height:3px;background:#c0077c"></div>
<div class="a" style="left:973px;top:636px;width:3px;height:84px;background:#fff"></div>
<div class="a" style="left:971px;top:636px;width:2px;height:84px;background:#c0077c"></div>
<div class="a" style="left:971px;top:639px;width:560px;height:2px;background:#fff"></div>
<div class="a" style="left:971px;top:636px;width:560px;height:3px;background:#c0077c"></div>
<div class="a" style="left:1338px;top:778px;width:337px;height:2px;background:#fff"></div>
<div class="a" style="left:1338px;top:775px;width:337px;height:3px;background:#c0077c"></div>
<div class="a" style="left:1674px;top:775px;width:3px;height:274px;background:#fff"></div>
<div class="a" style="left:1672px;top:775px;width:2px;height:274px;background:#c0077c"></div>
<div class="a" style="left:1071px;top:919px;width:3px;height:27px;background:#fff"></div>
<div class="a" style="left:1069px;top:919px;width:2px;height:27px;background:#c0077c"></div>
<div class="a" style="left:510px;top:946px;width:561px;height:2px;background:#fff"></div>
<div class="a" style="left:510px;top:943px;width:561px;height:3px;background:#c0077c"></div>
<div class="a" style="left:511px;top:943px;width:3px;height:247px;background:#fff"></div>
<div class="a" style="left:509px;top:943px;width:2px;height:247px;background:#c0077c"></div>
<div class="a" style="left:1531px;top:141px;width:722px;height:285px;background:#fff;border:1px solid #bdbdbd;box-shadow:2px 2px 0 #000;box-sizing:border-box"></div>
<div class="a" style="left:1531px;top:538px;width:710px;height:200px;background:#fff;border:1px solid #bdbdbd;box-shadow:2px 2px 0 #000;box-sizing:border-box"></div>
<div class="a" style="left:1105px;top:1048px;width:1137px;height:512px;background:#fff;border:1px solid #bdbdbd;box-shadow:2px 2px 0 #000;box-sizing:border-box"></div>
<div class="a" style="left:1px;top:1190px;width:1021px;height:142px;background:#fff;border:1px solid #bdbdbd;box-shadow:2px 2px 0 #000;box-sizing:border-box"></div>
<div class="a" style="left:1112px;top:1165px;width:55px;height:2px;background:#800000"></div>
<div class="a" style="left:1112px;top:1261px;width:77px;height:2px;background:#800000"></div>
<div class="a" style="left:1112px;top:1338px;width:89px;height:2px;background:#800000"></div>
<div class="a" style="left:1112px;top:1415px;width:248px;height:1px;background:#800000"></div>
<div class="a" style="left:1112px;top:1491px;width:346px;height:2px;background:#800000"></div>
</body></html>
